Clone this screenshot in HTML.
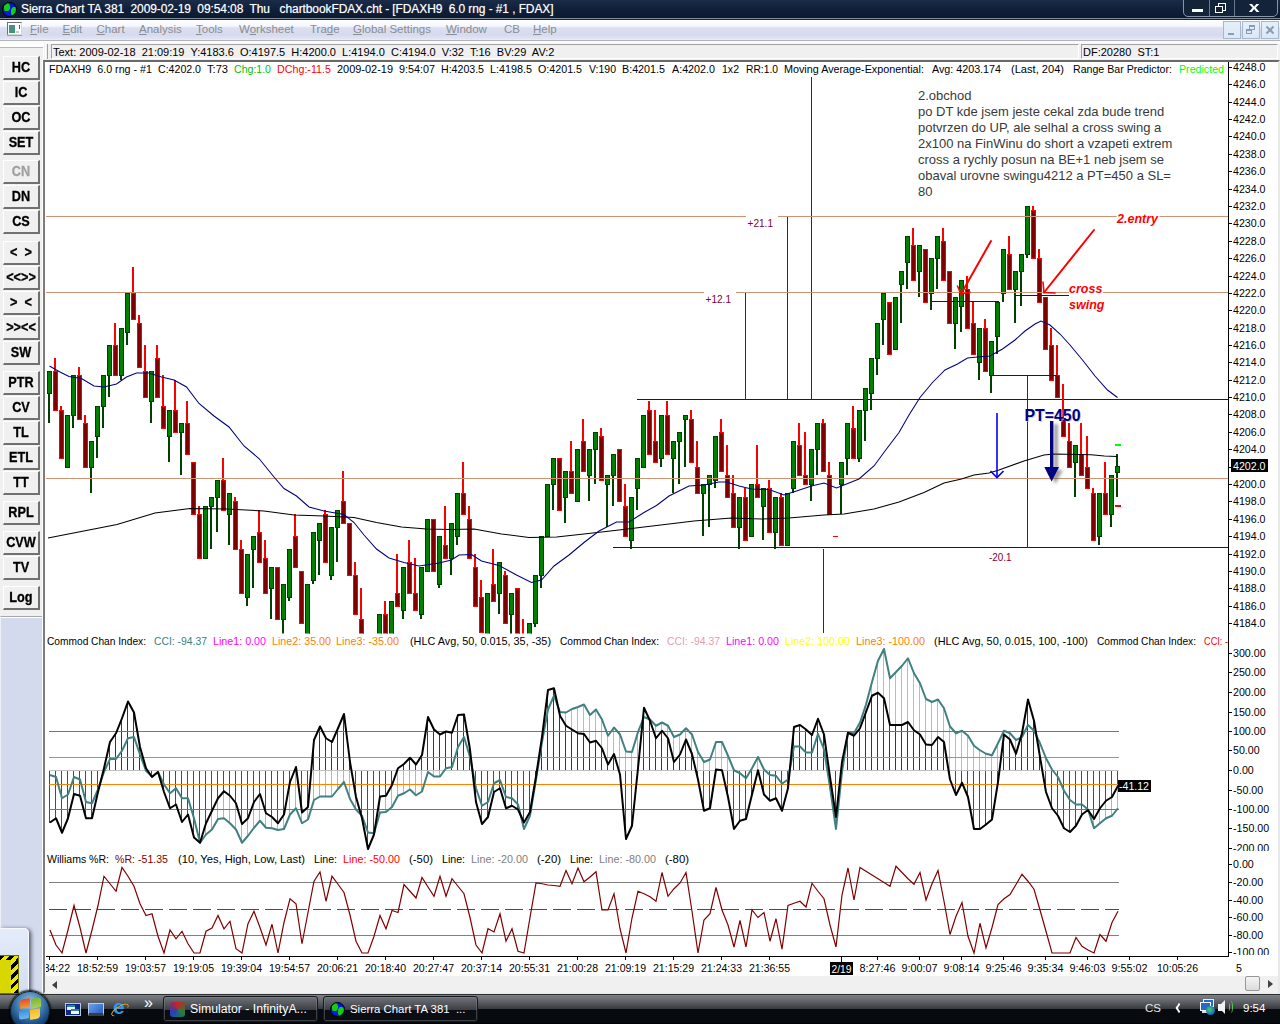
<!DOCTYPE html>
<html><head><meta charset="utf-8"><title>Sierra Chart</title>
<style>
html,body{margin:0;padding:0}
body{width:1280px;height:1024px;overflow:hidden;position:relative;background:#fff;font-family:"Liberation Sans",sans-serif;font-size:11px}
div,span{position:absolute;box-sizing:border-box}
#title{left:0;top:0;width:1280px;height:20px;background:linear-gradient(#1b2c48 0,#10203a 9px,#0c1a2e 18px,#7f8a9a 18px,#7f8a9a 19px,#1a2434 19px)}
#title .t{left:21px;top:2px;color:#fff;font-size:12px;white-space:pre;letter-spacing:-.1px;text-shadow:0 0 1px #fff8}
#globe{left:2px;top:2px;width:15px;height:15px;border-radius:50%;background:#0018e0;overflow:hidden;border:1px solid #000}
#wb{left:1183px;top:-2px;width:95px;height:19px;border:1px solid #8995a8;border-radius:0 0 5px 5px;background:#13233a}
#wb i{position:absolute;top:0;height:17px;border-left:1px solid #6b788c}
#menu{left:0;top:20px;width:1280px;height:21px;background:linear-gradient(#ffffff 0,#f6f7fc 6px,#dcdff1 8px,#d6daee 15px,#e2e5f3 19px,#eef0f8 20px);border-bottom:1px solid #b4b4b8}
.m{top:3px;color:#8a8d93;font-size:11.5px;white-space:pre}
.mb{top:1px;width:18px;height:18px;border:1px solid #a8b8cc;background:linear-gradient(#e6f0fa,#dbe8f6);}
#gap{left:0;top:41px;width:1280px;height:3px;background:#fafafa}
#left{left:0;top:47px;width:43px;height:947px;background:#f0f0f0;border-top:1px solid #b8b8b8}
#lav{left:0;top:616px;width:42px;height:378px;background:#d4daed;border-top:1px solid #a8a8a8;border-left:1px solid #eef0f8;box-shadow:inset 0 1px 0 #fff}
#lstrip{left:42px;top:60px;width:1px;height:934px;background:#fff}
.b{left:3px;width:37px;height:24px;background:#f0f0f0;border:1px solid;border-color:#fff #707070 #707070 #fff;border-right-width:2px;border-bottom-width:2px}
.b span{left:-10px;right:-10px;top:2px;text-align:center;font-weight:bold;font-size:14.6px;transform:scaleX(.87);color:#000;white-space:pre;-webkit-text-stroke:.3px #000}
.b.dis span{color:#a0a0a0;-webkit-text-stroke:.3px #a0a0a0}
#status{left:44px;top:44px;width:1236px;height:16px;background:#f0f0f0}
.sb{top:0;height:15px;border:1px solid;border-color:#a0a0a0 #fff #fff #a0a0a0;font-size:11px;line-height:14px;padding-left:1px;white-space:pre;color:#000}
#chart{left:43px;top:60px;width:1237px;height:934px;background:#fff;border:2px solid;border-color:#696969 #e8e8e8 #e8e8e8 #7c7c7c}
#hs{left:45px;top:976px;width:1233px;height:17px;background:#f0f0f0}
#task{left:0;top:994px;width:1280px;height:30px;background:linear-gradient(#2e3134 0,#2e3134 1px,#7c8084 1px,#6c7074 5px,#36393d 15px,#080c12 15px,#05080c 29px,#000 29px)}
.tb{top:2px;height:26px;border:1px solid #15181c;border-radius:3px;box-shadow:inset 0 0 0 1px #8a8e9466;background:linear-gradient(#70747a,#3a3d42 13px,#0a0e14 13px,#0a0d12);color:#fff;font-size:12.3px;line-height:25px;padding-left:26px;white-space:pre}
svg{position:absolute;left:0;top:0}
</style></head><body>
<div id="title"><div id="globe"><span style="left:1px;top:0;width:6px;height:8px;background:#10d010;border-radius:40% 60% 50% 30%"></span><span style="left:8px;top:4px;width:6px;height:9px;background:#10d010;border-radius:50% 30% 60% 40%"></span></div>
<span class="t">Sierra Chart TA 381  2009-02-19  09:54:08  Thu   chartbookFDAX.cht - [FDAXH9  6.0 rng - #1 , FDAX]</span>
<div id="wb"><i style="left:25px"></i><i style="left:50px"></i>
<span style="left:8px;top:10px;width:11px;height:3px;background:#fff"></span>
<span style="left:34px;top:4px;width:8px;height:8px;border:1.5px solid #fff"></span><span style="left:31px;top:7px;width:8px;height:7px;border:1.5px solid #fff;background:#13233a"></span>
<span style="left:66px;top:-1px;color:#fff;font-weight:bold;font-size:15px;transform:scaleX(1.3)">x</span></div></div>
<div id="menu"><span style="left:7px;top:2px;width:15px;height:13px;border:1px solid;border-color:#707070 #d8d8d8 #d8d8d8 #707070;background:#fff;box-shadow:0 1px 0 #a0a0a0"><span style="left:1px;top:2px;width:6px;height:8px;background:linear-gradient(#4a8aa0,#3f9a60)"></span><span style="left:11px;top:2px;width:1px;height:4px;background:#2060c0"></span><span style="left:8px;top:8px;width:3px;height:2px;background:#c8c8c8"></span></span><span class="m" style="left:30px"><u>F</u>ile</span><span class="m" style="left:62.5px"><u>E</u>dit</span><span class="m" style="left:96.5px"><u>C</u>hart</span><span class="m" style="left:139px"><u>A</u>nalysis</span><span class="m" style="left:196px"><u>T</u>ools</span><span class="m" style="left:239px">W<u>o</u>rksheet</span><span class="m" style="left:310px">Tra<u>d</u>e</span><span class="m" style="left:353px"><u>G</u>lobal Settings</span><span class="m" style="left:446px"><u>W</u>indow</span><span class="m" style="left:504px">CB</span><span class="m" style="left:533px"><u>H</u>elp</span>
<div class="mb" style="left:1223px"><span style="left:4px;top:11px;width:6px;height:2px;background:#8b9bb5"></span></div>
<div class="mb" style="left:1242px"><span style="left:6px;top:3px;width:6px;height:5px;border:1px solid #8b9bb5;border-top-width:2px"></span><span style="left:3px;top:7px;width:6px;height:5px;border:1px solid #8b9bb5;border-top-width:2px;background:#e2e9f6"></span></div>
<div class="mb" style="left:1261px"><span style="left:3px;top:7px;width:10px;height:2px;background:#8b9bb5;transform:rotate(45deg)"></span><span style="left:3px;top:7px;width:10px;height:2px;background:#8b9bb5;transform:rotate(-45deg)"></span></div></div>
<div id="gap"></div>
<div id="left"></div><div id="lav"></div><div id="lstrip"></div>
<div class="b" style="top:56px"><span>HC</span></div><div class="b" style="top:81px"><span>IC</span></div><div class="b" style="top:106px"><span>OC</span></div><div class="b" style="top:131px"><span>SET</span></div><div class="b dis" style="top:160px"><span>CN</span></div><div class="b" style="top:185px"><span>DN</span></div><div class="b" style="top:210px"><span>CS</span></div><div class="b" style="top:241px"><span>&lt;  &gt;</span></div><div class="b" style="top:266px"><span>&lt;&lt;&gt;&gt;</span></div><div class="b" style="top:291px"><span>&gt;  &lt;</span></div><div class="b" style="top:316px"><span>&gt;&gt;&lt;&lt;</span></div><div class="b" style="top:341px"><span>SW</span></div><div class="b" style="top:371px"><span>PTR</span></div><div class="b" style="top:396px"><span>CV</span></div><div class="b" style="top:421px"><span>TL</span></div><div class="b" style="top:446px"><span>ETL</span></div><div class="b" style="top:471px"><span>TT</span></div><div class="b" style="top:501px"><span>RPL</span></div><div class="b" style="top:531px"><span>CVW</span></div><div class="b" style="top:556px"><span>TV</span></div><div class="b" style="top:586px"><span>Log</span></div>
<div id="gadget" style="left:0;top:928px;width:29px;height:66px;background:linear-gradient(#e4ecfa,#d4def2);border:1px solid #f8f9fd;border-left:0;border-radius:0 5px 0 0;box-shadow:2px 1px 4px #4a5068"></div>
<div style="left:0;top:955px;width:19px;height:39px;background:#d8d800;border:1px solid #707000;border-left:0;overflow:hidden"><span style="left:11px;top:0;width:7px;height:39px;background:repeating-linear-gradient(135deg,#000 0 3px,#e8e800 3px 7px)"></span><span style="left:0;top:0;width:19px;height:4px;background:repeating-linear-gradient(135deg,#000 0 3px,#e8e800 3px 7px)"></span></div>
<div id="status"><div class="sb" style="left:7px;width:1028px">Text: 2009-02-18  21:09:19  Y:4183.6  O:4197.5  H:4200.0  L:4194.0  C:4194.0  V:32  T:16  BV:29  AV:2</div><div class="sb" style="left:1037px;width:197px">DF:20280  ST:1</div><span style="left:1px;top:0;width:3px;height:15px;border-left:1px solid #fff;border-right:1px solid #a0a0a0"></span></div>
<div id="chart"></div>
<div id="hs"><span style="left:7px;top:5px;border:4px solid transparent;border-right:5px solid #404040;border-left:0"></span><span style="left:1200px;top:0px;width:15px;height:15px;border:1px solid #979797;border-radius:2px;background:linear-gradient(#f4f4f4,#dcdcdc)"></span><span style="left:1223px;top:4px;border:4px solid transparent;border-left:5px solid #404040;border-right:0"></span></div>
<svg width="1280" height="1024" viewBox="0 0 1280 1024" font-family="'Liberation Sans',sans-serif">
<defs><clipPath id="cm"><rect x="46" y="62" width="1182" height="571.5"/></clipPath><clipPath id="cx"><rect x="46" y="957" width="1232" height="20"/></clipPath><filter id="sh" x="-50%" y="-20%" width="250%" height="150%"><feGaussianBlur stdDeviation="1.6"/></filter></defs>
<g clip-path="url(#cm)" shape-rendering="crispEdges">
<rect x="637" y="399" width="591" height="1" fill="#0000ff"/>
<rect x="613" y="547" width="615" height="1" fill="#0000ff"/>
<rect x="811" y="77" width="1.4" height="323" fill="#800040"/>
<rect x="787" y="217" width="1.4" height="183" fill="#800040"/>
<rect x="745" y="293" width="1.4" height="107" fill="#800040"/>
<rect x="823" y="549" width="1.4" height="84" fill="#800040"/>
<rect x="1027" y="375" width="1.4" height="173" fill="#800040"/>
<rect x="48" y="392.78" width="2" height="30.41" fill="#004000"/>
<rect x="47.5" y="371.56" width="4" height="21.72" fill="#008000" stroke="#004000" stroke-width="1"/>
<rect x="54" y="358.03" width="2" height="13.03" fill="#ff0000"/>
<rect x="53.5" y="371.56" width="4" height="39.09" fill="#800000" stroke="#ff0000" stroke-width="1"/>
<rect x="60" y="405.81" width="2" height="4.34" fill="#ff0000"/>
<rect x="59.5" y="410.66" width="4" height="47.78" fill="#800000" stroke="#ff0000" stroke-width="1"/>
<rect x="65.5" y="415" width="4" height="52.12" fill="#008000" stroke="#004000" stroke-width="1"/>
<rect x="72" y="414.5" width="2" height="13.03" fill="#004000"/>
<rect x="71.5" y="375.91" width="4" height="39.09" fill="#008000" stroke="#004000" stroke-width="1"/>
<rect x="78" y="366.72" width="2" height="8.69" fill="#ff0000"/>
<rect x="77.5" y="375.91" width="4" height="43.44" fill="#800000" stroke="#ff0000" stroke-width="1"/>
<rect x="84" y="414.5" width="2" height="8.69" fill="#ff0000"/>
<rect x="83.5" y="423.69" width="4" height="43.44" fill="#800000" stroke="#ff0000" stroke-width="1"/>
<rect x="90" y="466.62" width="2" height="26.06" fill="#004000"/>
<rect x="89.5" y="441.06" width="4" height="26.06" fill="#008000" stroke="#004000" stroke-width="1"/>
<rect x="96" y="436.22" width="2" height="21.72" fill="#004000"/>
<rect x="95.5" y="406.31" width="4" height="30.41" fill="#008000" stroke="#004000" stroke-width="1"/>
<rect x="102" y="405.81" width="2" height="21.72" fill="#004000"/>
<rect x="101.5" y="375.91" width="4" height="30.41" fill="#008000" stroke="#004000" stroke-width="1"/>
<rect x="108" y="375.41" width="2" height="21.72" fill="#004000"/>
<rect x="107.5" y="345.5" width="4" height="30.41" fill="#008000" stroke="#004000" stroke-width="1"/>
<rect x="114" y="323.28" width="2" height="21.72" fill="#ff0000"/>
<rect x="113.5" y="345.5" width="4" height="30.41" fill="#800000" stroke="#ff0000" stroke-width="1"/>
<rect x="120" y="375.41" width="2" height="4.34" fill="#004000"/>
<rect x="119.5" y="328.12" width="4" height="47.78" fill="#008000" stroke="#004000" stroke-width="1"/>
<rect x="126" y="331.97" width="2" height="13.03" fill="#004000"/>
<rect x="125.5" y="293.38" width="4" height="39.09" fill="#008000" stroke="#004000" stroke-width="1"/>
<rect x="132" y="266.81" width="2" height="26.06" fill="#ff0000"/>
<rect x="131.5" y="293.38" width="4" height="26.06" fill="#800000" stroke="#ff0000" stroke-width="1"/>
<rect x="138" y="314.59" width="2" height="8.69" fill="#ff0000"/>
<rect x="137.5" y="323.78" width="4" height="43.44" fill="#800000" stroke="#ff0000" stroke-width="1"/>
<rect x="144" y="345" width="2" height="26.06" fill="#ff0000"/>
<rect x="143.5" y="371.56" width="4" height="26.06" fill="#800000" stroke="#ff0000" stroke-width="1"/>
<rect x="150" y="401.47" width="2" height="21.72" fill="#004000"/>
<rect x="149.5" y="371.56" width="4" height="30.41" fill="#008000" stroke="#004000" stroke-width="1"/>
<rect x="156" y="345" width="2" height="13.03" fill="#ff0000"/>
<rect x="155.5" y="358.53" width="4" height="39.09" fill="#800000" stroke="#ff0000" stroke-width="1"/>
<rect x="162" y="375.41" width="2" height="30.41" fill="#ff0000"/>
<rect x="161.5" y="406.31" width="4" height="21.72" fill="#800000" stroke="#ff0000" stroke-width="1"/>
<rect x="168" y="436.22" width="2" height="26.06" fill="#004000"/>
<rect x="167.5" y="410.66" width="4" height="26.06" fill="#008000" stroke="#004000" stroke-width="1"/>
<rect x="174" y="379.75" width="2" height="30.41" fill="#ff0000"/>
<rect x="173.5" y="410.66" width="4" height="21.72" fill="#800000" stroke="#ff0000" stroke-width="1"/>
<rect x="180" y="431.88" width="2" height="43.44" fill="#004000"/>
<rect x="179.5" y="423.69" width="4" height="8.69" fill="#008000" stroke="#004000" stroke-width="1"/>
<rect x="186" y="401.47" width="2" height="21.72" fill="#ff0000"/>
<rect x="185.5" y="423.69" width="4" height="30.41" fill="#800000" stroke="#ff0000" stroke-width="1"/>
<rect x="191.5" y="462.78" width="4" height="52.12" fill="#800000" stroke="#ff0000" stroke-width="1"/>
<rect x="198" y="505.72" width="2" height="8.69" fill="#ff0000"/>
<rect x="197.5" y="514.91" width="4" height="43.44" fill="#800000" stroke="#ff0000" stroke-width="1"/>
<rect x="203.5" y="506.22" width="4" height="52.12" fill="#008000" stroke="#004000" stroke-width="1"/>
<rect x="210" y="505.72" width="2" height="43.44" fill="#004000"/>
<rect x="209.5" y="497.53" width="4" height="8.69" fill="#008000" stroke="#004000" stroke-width="1"/>
<rect x="216" y="497.03" width="2" height="34.75" fill="#004000"/>
<rect x="215.5" y="480.16" width="4" height="17.38" fill="#008000" stroke="#004000" stroke-width="1"/>
<rect x="222" y="457.94" width="2" height="21.72" fill="#ff0000"/>
<rect x="221.5" y="480.16" width="4" height="30.41" fill="#800000" stroke="#ff0000" stroke-width="1"/>
<rect x="228" y="514.41" width="2" height="30.41" fill="#004000"/>
<rect x="227.5" y="493.19" width="4" height="21.72" fill="#008000" stroke="#004000" stroke-width="1"/>
<rect x="234" y="497.03" width="2" height="4.34" fill="#ff0000"/>
<rect x="233.5" y="501.88" width="4" height="47.78" fill="#800000" stroke="#ff0000" stroke-width="1"/>
<rect x="240" y="540.47" width="2" height="8.69" fill="#ff0000"/>
<rect x="239.5" y="549.66" width="4" height="43.44" fill="#800000" stroke="#ff0000" stroke-width="1"/>
<rect x="246" y="596.94" width="2" height="8.69" fill="#004000"/>
<rect x="245.5" y="554" width="4" height="43.44" fill="#008000" stroke="#004000" stroke-width="1"/>
<rect x="252" y="549.16" width="2" height="39.09" fill="#004000"/>
<rect x="251.5" y="536.62" width="4" height="13.03" fill="#008000" stroke="#004000" stroke-width="1"/>
<rect x="258" y="510.06" width="2" height="21.72" fill="#ff0000"/>
<rect x="257.5" y="532.28" width="4" height="30.41" fill="#800000" stroke="#ff0000" stroke-width="1"/>
<rect x="264" y="540.47" width="2" height="17.38" fill="#ff0000"/>
<rect x="263.5" y="558.34" width="4" height="34.75" fill="#800000" stroke="#ff0000" stroke-width="1"/>
<rect x="270" y="588.25" width="2" height="30.41" fill="#004000"/>
<rect x="269.5" y="567.03" width="4" height="21.72" fill="#008000" stroke="#004000" stroke-width="1"/>
<rect x="275.5" y="567.03" width="4" height="52.12" fill="#800000" stroke="#ff0000" stroke-width="1"/>
<rect x="282" y="618.66" width="2" height="17.38" fill="#004000"/>
<rect x="281.5" y="584.41" width="4" height="34.75" fill="#008000" stroke="#004000" stroke-width="1"/>
<rect x="288" y="596.94" width="2" height="4.34" fill="#004000"/>
<rect x="287.5" y="549.66" width="4" height="47.78" fill="#008000" stroke="#004000" stroke-width="1"/>
<rect x="294" y="514.41" width="2" height="21.72" fill="#ff0000"/>
<rect x="293.5" y="536.62" width="4" height="30.41" fill="#800000" stroke="#ff0000" stroke-width="1"/>
<rect x="299.5" y="571.38" width="4" height="52.12" fill="#800000" stroke="#ff0000" stroke-width="1"/>
<rect x="305.5" y="584.41" width="4" height="52.12" fill="#008000" stroke="#004000" stroke-width="1"/>
<rect x="312" y="579.56" width="2" height="4.34" fill="#004000"/>
<rect x="311.5" y="532.28" width="4" height="47.78" fill="#008000" stroke="#004000" stroke-width="1"/>
<rect x="318" y="540.47" width="2" height="34.75" fill="#004000"/>
<rect x="317.5" y="523.59" width="4" height="17.38" fill="#008000" stroke="#004000" stroke-width="1"/>
<rect x="324" y="510.06" width="2" height="4.34" fill="#ff0000"/>
<rect x="323.5" y="514.91" width="4" height="47.78" fill="#800000" stroke="#ff0000" stroke-width="1"/>
<rect x="330" y="575.22" width="2" height="4.34" fill="#004000"/>
<rect x="329.5" y="527.94" width="4" height="47.78" fill="#008000" stroke="#004000" stroke-width="1"/>
<rect x="336" y="527.44" width="2" height="34.75" fill="#004000"/>
<rect x="335.5" y="510.56" width="4" height="17.38" fill="#008000" stroke="#004000" stroke-width="1"/>
<rect x="342" y="470.97" width="2" height="30.41" fill="#ff0000"/>
<rect x="341.5" y="501.88" width="4" height="21.72" fill="#800000" stroke="#ff0000" stroke-width="1"/>
<rect x="347.5" y="523.59" width="4" height="52.12" fill="#800000" stroke="#ff0000" stroke-width="1"/>
<rect x="354" y="562.19" width="2" height="13.03" fill="#ff0000"/>
<rect x="353.5" y="575.72" width="4" height="39.09" fill="#800000" stroke="#ff0000" stroke-width="1"/>
<rect x="360" y="588.25" width="2" height="30.41" fill="#ff0000"/>
<rect x="359.5" y="619.16" width="4" height="21.72" fill="#800000" stroke="#ff0000" stroke-width="1"/>
<rect x="366" y="640.38" width="2" height="8.69" fill="#ff0000"/>
<rect x="365.5" y="649.56" width="4" height="34.75" fill="#800000" stroke="#ff0000" stroke-width="1"/>
<rect x="372" y="675.12" width="2" height="8.69" fill="#004000"/>
<rect x="371.5" y="640.88" width="4" height="34.75" fill="#008000" stroke="#004000" stroke-width="1"/>
<rect x="378" y="657.75" width="2" height="8.69" fill="#004000"/>
<rect x="377.5" y="614.81" width="4" height="43.44" fill="#008000" stroke="#004000" stroke-width="1"/>
<rect x="384" y="601.28" width="2" height="13.03" fill="#ff0000"/>
<rect x="383.5" y="614.81" width="4" height="39.09" fill="#800000" stroke="#ff0000" stroke-width="1"/>
<rect x="390" y="649.06" width="2" height="4.34" fill="#004000"/>
<rect x="389.5" y="601.78" width="4" height="47.78" fill="#008000" stroke="#004000" stroke-width="1"/>
<rect x="396" y="553.5" width="2" height="39.09" fill="#ff0000"/>
<rect x="395.5" y="593.09" width="4" height="13.03" fill="#800000" stroke="#ff0000" stroke-width="1"/>
<rect x="402" y="609.97" width="2" height="8.69" fill="#004000"/>
<rect x="401.5" y="567.03" width="4" height="43.44" fill="#008000" stroke="#004000" stroke-width="1"/>
<rect x="408" y="540.47" width="2" height="21.72" fill="#ff0000"/>
<rect x="407.5" y="562.69" width="4" height="30.41" fill="#800000" stroke="#ff0000" stroke-width="1"/>
<rect x="414" y="557.84" width="2" height="34.75" fill="#ff0000"/>
<rect x="413.5" y="593.09" width="4" height="17.38" fill="#800000" stroke="#ff0000" stroke-width="1"/>
<rect x="420" y="614.31" width="2" height="4.34" fill="#004000"/>
<rect x="419.5" y="567.03" width="4" height="47.78" fill="#008000" stroke="#004000" stroke-width="1"/>
<rect x="425.5" y="519.25" width="4" height="52.12" fill="#008000" stroke="#004000" stroke-width="1"/>
<rect x="431.5" y="519.25" width="4" height="52.12" fill="#800000" stroke="#ff0000" stroke-width="1"/>
<rect x="438" y="583.91" width="2" height="4.34" fill="#004000"/>
<rect x="437.5" y="536.62" width="4" height="47.78" fill="#008000" stroke="#004000" stroke-width="1"/>
<rect x="444" y="505.72" width="2" height="39.09" fill="#ff0000"/>
<rect x="443.5" y="545.31" width="4" height="13.03" fill="#800000" stroke="#ff0000" stroke-width="1"/>
<rect x="450" y="557.84" width="2" height="17.38" fill="#004000"/>
<rect x="449.5" y="523.59" width="4" height="34.75" fill="#008000" stroke="#004000" stroke-width="1"/>
<rect x="456" y="536.12" width="2" height="8.69" fill="#004000"/>
<rect x="455.5" y="493.19" width="4" height="43.44" fill="#008000" stroke="#004000" stroke-width="1"/>
<rect x="462" y="462.28" width="2" height="30.41" fill="#ff0000"/>
<rect x="461.5" y="493.19" width="4" height="21.72" fill="#800000" stroke="#ff0000" stroke-width="1"/>
<rect x="468" y="505.72" width="2" height="13.03" fill="#ff0000"/>
<rect x="467.5" y="519.25" width="4" height="39.09" fill="#800000" stroke="#ff0000" stroke-width="1"/>
<rect x="474" y="553.5" width="2" height="13.03" fill="#ff0000"/>
<rect x="473.5" y="567.03" width="4" height="39.09" fill="#800000" stroke="#ff0000" stroke-width="1"/>
<rect x="480" y="579.56" width="2" height="17.38" fill="#ff0000"/>
<rect x="479.5" y="597.44" width="4" height="34.75" fill="#800000" stroke="#ff0000" stroke-width="1"/>
<rect x="486" y="640.38" width="2" height="4.34" fill="#004000"/>
<rect x="485.5" y="593.09" width="4" height="47.78" fill="#008000" stroke="#004000" stroke-width="1"/>
<rect x="492" y="549.16" width="2" height="34.75" fill="#ff0000"/>
<rect x="491.5" y="584.41" width="4" height="17.38" fill="#800000" stroke="#ff0000" stroke-width="1"/>
<rect x="498" y="592.59" width="2" height="21.72" fill="#004000"/>
<rect x="497.5" y="562.69" width="4" height="30.41" fill="#008000" stroke="#004000" stroke-width="1"/>
<rect x="504" y="570.88" width="2" height="4.34" fill="#ff0000"/>
<rect x="503.5" y="575.72" width="4" height="47.78" fill="#800000" stroke="#ff0000" stroke-width="1"/>
<rect x="510" y="614.31" width="2" height="30.41" fill="#004000"/>
<rect x="509.5" y="593.09" width="4" height="21.72" fill="#008000" stroke="#004000" stroke-width="1"/>
<rect x="515.5" y="588.75" width="4" height="52.12" fill="#800000" stroke="#ff0000" stroke-width="1"/>
<rect x="522" y="618.66" width="2" height="30.41" fill="#ff0000"/>
<rect x="521.5" y="649.56" width="4" height="21.72" fill="#800000" stroke="#ff0000" stroke-width="1"/>
<rect x="528" y="666.44" width="2" height="8.69" fill="#004000"/>
<rect x="527.5" y="623.5" width="4" height="43.44" fill="#008000" stroke="#004000" stroke-width="1"/>
<rect x="534" y="623" width="2" height="4.34" fill="#004000"/>
<rect x="533.5" y="575.72" width="4" height="47.78" fill="#008000" stroke="#004000" stroke-width="1"/>
<rect x="540" y="575.22" width="2" height="13.03" fill="#004000"/>
<rect x="539.5" y="536.62" width="4" height="39.09" fill="#008000" stroke="#004000" stroke-width="1"/>
<rect x="545.5" y="484.5" width="4" height="52.12" fill="#008000" stroke="#004000" stroke-width="1"/>
<rect x="552" y="484" width="2" height="26.06" fill="#004000"/>
<rect x="551.5" y="458.44" width="4" height="26.06" fill="#008000" stroke="#004000" stroke-width="1"/>
<rect x="557.5" y="458.44" width="4" height="52.12" fill="#800000" stroke="#ff0000" stroke-width="1"/>
<rect x="564" y="497.03" width="2" height="26.06" fill="#004000"/>
<rect x="563.5" y="471.47" width="4" height="26.06" fill="#008000" stroke="#004000" stroke-width="1"/>
<rect x="570" y="440.56" width="2" height="30.41" fill="#ff0000"/>
<rect x="569.5" y="471.47" width="4" height="21.72" fill="#800000" stroke="#ff0000" stroke-width="1"/>
<rect x="575.5" y="449.75" width="4" height="52.12" fill="#008000" stroke="#004000" stroke-width="1"/>
<rect x="582" y="418.84" width="2" height="21.72" fill="#ff0000"/>
<rect x="581.5" y="441.06" width="4" height="30.41" fill="#800000" stroke="#ff0000" stroke-width="1"/>
<rect x="588" y="475.31" width="2" height="26.06" fill="#004000"/>
<rect x="587.5" y="449.75" width="4" height="26.06" fill="#008000" stroke="#004000" stroke-width="1"/>
<rect x="594" y="449.25" width="2" height="34.75" fill="#004000"/>
<rect x="593.5" y="432.38" width="4" height="17.38" fill="#008000" stroke="#004000" stroke-width="1"/>
<rect x="600" y="427.53" width="2" height="8.69" fill="#ff0000"/>
<rect x="599.5" y="436.72" width="4" height="43.44" fill="#800000" stroke="#ff0000" stroke-width="1"/>
<rect x="606" y="484" width="2" height="43.44" fill="#004000"/>
<rect x="605.5" y="475.81" width="4" height="8.69" fill="#008000" stroke="#004000" stroke-width="1"/>
<rect x="612" y="475.31" width="2" height="30.41" fill="#004000"/>
<rect x="611.5" y="454.09" width="4" height="21.72" fill="#008000" stroke="#004000" stroke-width="1"/>
<rect x="617.5" y="449.75" width="4" height="52.12" fill="#800000" stroke="#ff0000" stroke-width="1"/>
<rect x="624" y="484" width="2" height="21.72" fill="#ff0000"/>
<rect x="623.5" y="506.22" width="4" height="30.41" fill="#800000" stroke="#ff0000" stroke-width="1"/>
<rect x="630" y="540.47" width="2" height="8.69" fill="#004000"/>
<rect x="629.5" y="497.53" width="4" height="43.44" fill="#008000" stroke="#004000" stroke-width="1"/>
<rect x="636" y="488.34" width="2" height="21.72" fill="#004000"/>
<rect x="635.5" y="458.44" width="4" height="30.41" fill="#008000" stroke="#004000" stroke-width="1"/>
<rect x="641.5" y="415" width="4" height="52.12" fill="#008000" stroke="#004000" stroke-width="1"/>
<rect x="648" y="401.47" width="2" height="8.69" fill="#ff0000"/>
<rect x="647.5" y="410.66" width="4" height="43.44" fill="#800000" stroke="#ff0000" stroke-width="1"/>
<rect x="654" y="410.16" width="2" height="30.41" fill="#ff0000"/>
<rect x="653.5" y="441.06" width="4" height="21.72" fill="#800000" stroke="#ff0000" stroke-width="1"/>
<rect x="660" y="457.94" width="2" height="8.69" fill="#004000"/>
<rect x="659.5" y="415" width="4" height="43.44" fill="#008000" stroke="#004000" stroke-width="1"/>
<rect x="666" y="401.47" width="2" height="13.03" fill="#ff0000"/>
<rect x="665.5" y="415" width="4" height="39.09" fill="#800000" stroke="#ff0000" stroke-width="1"/>
<rect x="672" y="457.94" width="2" height="34.75" fill="#004000"/>
<rect x="671.5" y="441.06" width="4" height="17.38" fill="#008000" stroke="#004000" stroke-width="1"/>
<rect x="678" y="440.56" width="2" height="43.44" fill="#004000"/>
<rect x="677.5" y="432.38" width="4" height="8.69" fill="#008000" stroke="#004000" stroke-width="1"/>
<rect x="684" y="418.84" width="2" height="47.78" fill="#004000"/>
<rect x="683.5" y="415" width="4" height="4.34" fill="#008000" stroke="#004000" stroke-width="1"/>
<rect x="690" y="410.16" width="2" height="8.69" fill="#ff0000"/>
<rect x="689.5" y="419.34" width="4" height="43.44" fill="#800000" stroke="#ff0000" stroke-width="1"/>
<rect x="696" y="440.56" width="2" height="26.06" fill="#ff0000"/>
<rect x="695.5" y="467.12" width="4" height="26.06" fill="#800000" stroke="#ff0000" stroke-width="1"/>
<rect x="702" y="492.69" width="2" height="43.44" fill="#004000"/>
<rect x="701.5" y="484.5" width="4" height="8.69" fill="#008000" stroke="#004000" stroke-width="1"/>
<rect x="708" y="484" width="2" height="43.44" fill="#004000"/>
<rect x="707.5" y="475.81" width="4" height="8.69" fill="#008000" stroke="#004000" stroke-width="1"/>
<rect x="714" y="479.66" width="2" height="8.69" fill="#004000"/>
<rect x="713.5" y="436.72" width="4" height="43.44" fill="#008000" stroke="#004000" stroke-width="1"/>
<rect x="720" y="418.84" width="2" height="13.03" fill="#ff0000"/>
<rect x="719.5" y="432.38" width="4" height="39.09" fill="#800000" stroke="#ff0000" stroke-width="1"/>
<rect x="726" y="444.91" width="2" height="30.41" fill="#ff0000"/>
<rect x="725.5" y="475.81" width="4" height="21.72" fill="#800000" stroke="#ff0000" stroke-width="1"/>
<rect x="732" y="475.31" width="2" height="17.38" fill="#ff0000"/>
<rect x="731.5" y="493.19" width="4" height="34.75" fill="#800000" stroke="#ff0000" stroke-width="1"/>
<rect x="738" y="527.44" width="2" height="21.72" fill="#004000"/>
<rect x="737.5" y="497.53" width="4" height="30.41" fill="#008000" stroke="#004000" stroke-width="1"/>
<rect x="744" y="488.34" width="2" height="8.69" fill="#ff0000"/>
<rect x="743.5" y="497.53" width="4" height="43.44" fill="#800000" stroke="#ff0000" stroke-width="1"/>
<rect x="749.5" y="484.5" width="4" height="52.12" fill="#008000" stroke="#004000" stroke-width="1"/>
<rect x="756" y="444.91" width="2" height="39.09" fill="#ff0000"/>
<rect x="755.5" y="484.5" width="4" height="13.03" fill="#800000" stroke="#ff0000" stroke-width="1"/>
<rect x="762" y="505.72" width="2" height="34.75" fill="#004000"/>
<rect x="761.5" y="488.84" width="4" height="17.38" fill="#008000" stroke="#004000" stroke-width="1"/>
<rect x="768" y="479.66" width="2" height="8.69" fill="#ff0000"/>
<rect x="767.5" y="488.84" width="4" height="43.44" fill="#800000" stroke="#ff0000" stroke-width="1"/>
<rect x="774" y="531.78" width="2" height="17.38" fill="#004000"/>
<rect x="773.5" y="497.53" width="4" height="34.75" fill="#008000" stroke="#004000" stroke-width="1"/>
<rect x="780" y="492.69" width="2" height="4.34" fill="#ff0000"/>
<rect x="779.5" y="497.53" width="4" height="47.78" fill="#800000" stroke="#ff0000" stroke-width="1"/>
<rect x="785.5" y="493.19" width="4" height="52.12" fill="#008000" stroke="#004000" stroke-width="1"/>
<rect x="792" y="488.34" width="2" height="4.34" fill="#004000"/>
<rect x="791.5" y="441.06" width="4" height="47.78" fill="#008000" stroke="#004000" stroke-width="1"/>
<rect x="798" y="423.19" width="2" height="21.72" fill="#ff0000"/>
<rect x="797.5" y="445.41" width="4" height="30.41" fill="#800000" stroke="#ff0000" stroke-width="1"/>
<rect x="804" y="431.88" width="2" height="43.44" fill="#ff0000"/>
<rect x="803.5" y="475.81" width="4" height="8.69" fill="#800000" stroke="#ff0000" stroke-width="1"/>
<rect x="810" y="484" width="2" height="17.38" fill="#004000"/>
<rect x="809.5" y="449.75" width="4" height="34.75" fill="#008000" stroke="#004000" stroke-width="1"/>
<rect x="816" y="449.25" width="2" height="26.06" fill="#004000"/>
<rect x="815.5" y="423.69" width="4" height="26.06" fill="#008000" stroke="#004000" stroke-width="1"/>
<rect x="822" y="418.84" width="2" height="4.34" fill="#ff0000"/>
<rect x="821.5" y="423.69" width="4" height="47.78" fill="#800000" stroke="#ff0000" stroke-width="1"/>
<rect x="828" y="462.28" width="2" height="13.03" fill="#ff0000"/>
<rect x="827.5" y="475.81" width="4" height="39.09" fill="#800000" stroke="#ff0000" stroke-width="1"/>
<rect x="833" y="536" width="5" height="1" fill="#ff0000"/>
<rect x="840" y="484" width="2" height="30.41" fill="#004000"/>
<rect x="839.5" y="462.78" width="4" height="21.72" fill="#008000" stroke="#004000" stroke-width="1"/>
<rect x="846" y="457.94" width="2" height="17.38" fill="#004000"/>
<rect x="845.5" y="423.69" width="4" height="34.75" fill="#008000" stroke="#004000" stroke-width="1"/>
<rect x="852" y="405.81" width="2" height="21.72" fill="#ff0000"/>
<rect x="851.5" y="428.03" width="4" height="30.41" fill="#800000" stroke="#ff0000" stroke-width="1"/>
<rect x="858" y="457.94" width="2" height="4.34" fill="#004000"/>
<rect x="857.5" y="410.66" width="4" height="47.78" fill="#008000" stroke="#004000" stroke-width="1"/>
<rect x="864" y="410.16" width="2" height="30.41" fill="#004000"/>
<rect x="863.5" y="388.94" width="4" height="21.72" fill="#008000" stroke="#004000" stroke-width="1"/>
<rect x="870" y="392.78" width="2" height="17.38" fill="#004000"/>
<rect x="869.5" y="358.53" width="4" height="34.75" fill="#008000" stroke="#004000" stroke-width="1"/>
<rect x="876" y="358.03" width="2" height="17.38" fill="#004000"/>
<rect x="875.5" y="323.78" width="4" height="34.75" fill="#008000" stroke="#004000" stroke-width="1"/>
<rect x="882" y="318.94" width="2" height="26.06" fill="#004000"/>
<rect x="881.5" y="293.38" width="4" height="26.06" fill="#008000" stroke="#004000" stroke-width="1"/>
<rect x="887.5" y="302.06" width="4" height="52.12" fill="#800000" stroke="#ff0000" stroke-width="1"/>
<rect x="893.5" y="297.72" width="4" height="52.12" fill="#008000" stroke="#004000" stroke-width="1"/>
<rect x="900" y="284.19" width="2" height="39.09" fill="#004000"/>
<rect x="899.5" y="271.66" width="4" height="13.03" fill="#008000" stroke="#004000" stroke-width="1"/>
<rect x="906" y="262.47" width="2" height="26.06" fill="#004000"/>
<rect x="905.5" y="236.91" width="4" height="26.06" fill="#008000" stroke="#004000" stroke-width="1"/>
<rect x="912" y="227.72" width="2" height="17.38" fill="#ff0000"/>
<rect x="911.5" y="245.59" width="4" height="34.75" fill="#800000" stroke="#ff0000" stroke-width="1"/>
<rect x="918" y="271.16" width="2" height="26.06" fill="#004000"/>
<rect x="917.5" y="245.59" width="4" height="26.06" fill="#008000" stroke="#004000" stroke-width="1"/>
<rect x="923.5" y="249.94" width="4" height="52.12" fill="#800000" stroke="#ff0000" stroke-width="1"/>
<rect x="930" y="292.88" width="2" height="17.38" fill="#004000"/>
<rect x="929.5" y="258.62" width="4" height="34.75" fill="#008000" stroke="#004000" stroke-width="1"/>
<rect x="936" y="258.12" width="2" height="30.41" fill="#004000"/>
<rect x="935.5" y="236.91" width="4" height="21.72" fill="#008000" stroke="#004000" stroke-width="1"/>
<rect x="942" y="227.72" width="2" height="13.03" fill="#ff0000"/>
<rect x="941.5" y="241.25" width="4" height="39.09" fill="#800000" stroke="#ff0000" stroke-width="1"/>
<rect x="947.5" y="271.66" width="4" height="52.12" fill="#800000" stroke="#ff0000" stroke-width="1"/>
<rect x="954" y="323.28" width="2" height="26.06" fill="#004000"/>
<rect x="953.5" y="297.72" width="4" height="26.06" fill="#008000" stroke="#004000" stroke-width="1"/>
<rect x="960" y="305.91" width="2" height="26.06" fill="#004000"/>
<rect x="959.5" y="280.34" width="4" height="26.06" fill="#008000" stroke="#004000" stroke-width="1"/>
<rect x="966" y="275.5" width="2" height="13.03" fill="#ff0000"/>
<rect x="965.5" y="289.03" width="4" height="39.09" fill="#800000" stroke="#ff0000" stroke-width="1"/>
<rect x="972" y="301.56" width="2" height="21.72" fill="#ff0000"/>
<rect x="971.5" y="323.78" width="4" height="30.41" fill="#800000" stroke="#ff0000" stroke-width="1"/>
<rect x="978" y="362.38" width="2" height="17.38" fill="#004000"/>
<rect x="977.5" y="328.12" width="4" height="34.75" fill="#008000" stroke="#004000" stroke-width="1"/>
<rect x="984" y="318.94" width="2" height="8.69" fill="#ff0000"/>
<rect x="983.5" y="328.12" width="4" height="43.44" fill="#800000" stroke="#ff0000" stroke-width="1"/>
<rect x="990" y="375.41" width="2" height="17.38" fill="#004000"/>
<rect x="989.5" y="341.16" width="4" height="34.75" fill="#008000" stroke="#004000" stroke-width="1"/>
<rect x="996" y="336.31" width="2" height="17.38" fill="#004000"/>
<rect x="995.5" y="302.06" width="4" height="34.75" fill="#008000" stroke="#004000" stroke-width="1"/>
<rect x="1002" y="292.88" width="2" height="8.69" fill="#004000"/>
<rect x="1001.5" y="249.94" width="4" height="43.44" fill="#008000" stroke="#004000" stroke-width="1"/>
<rect x="1008" y="236.41" width="2" height="17.38" fill="#ff0000"/>
<rect x="1007.5" y="254.28" width="4" height="34.75" fill="#800000" stroke="#ff0000" stroke-width="1"/>
<rect x="1014" y="288.53" width="2" height="34.75" fill="#004000"/>
<rect x="1013.5" y="271.66" width="4" height="17.38" fill="#008000" stroke="#004000" stroke-width="1"/>
<rect x="1020" y="271.16" width="2" height="34.75" fill="#004000"/>
<rect x="1019.5" y="254.28" width="4" height="17.38" fill="#008000" stroke="#004000" stroke-width="1"/>
<rect x="1026" y="253.78" width="2" height="4.34" fill="#004000"/>
<rect x="1025.5" y="206.5" width="4" height="47.78" fill="#008000" stroke="#004000" stroke-width="1"/>
<rect x="1032" y="206" width="2" height="4.34" fill="#ff0000"/>
<rect x="1031.5" y="210.84" width="4" height="47.78" fill="#800000" stroke="#ff0000" stroke-width="1"/>
<rect x="1038" y="249.44" width="2" height="8.69" fill="#ff0000"/>
<rect x="1037.5" y="258.62" width="4" height="43.44" fill="#800000" stroke="#ff0000" stroke-width="1"/>
<rect x="1043.5" y="297.72" width="4" height="52.12" fill="#800000" stroke="#ff0000" stroke-width="1"/>
<rect x="1050" y="327.62" width="2" height="17.38" fill="#ff0000"/>
<rect x="1049.5" y="345.5" width="4" height="34.75" fill="#800000" stroke="#ff0000" stroke-width="1"/>
<rect x="1056" y="345" width="2" height="30.41" fill="#ff0000"/>
<rect x="1055.5" y="375.91" width="4" height="21.72" fill="#800000" stroke="#ff0000" stroke-width="1"/>
<rect x="1062" y="384.09" width="2" height="34.75" fill="#ff0000"/>
<rect x="1061.5" y="419.34" width="4" height="17.38" fill="#800000" stroke="#ff0000" stroke-width="1"/>
<rect x="1068" y="423.19" width="2" height="17.38" fill="#ff0000"/>
<rect x="1067.5" y="441.06" width="4" height="26.06" fill="#800000" stroke="#ff0000" stroke-width="1"/>
<rect x="1074" y="462.28" width="2" height="34.75" fill="#004000"/>
<rect x="1073.5" y="445.41" width="4" height="17.38" fill="#008000" stroke="#004000" stroke-width="1"/>
<rect x="1080" y="423.19" width="2" height="30.41" fill="#ff0000"/>
<rect x="1079.5" y="454.09" width="4" height="21.72" fill="#800000" stroke="#ff0000" stroke-width="1"/>
<rect x="1086" y="436.22" width="2" height="30.41" fill="#ff0000"/>
<rect x="1085.5" y="467.12" width="4" height="21.72" fill="#800000" stroke="#ff0000" stroke-width="1"/>
<rect x="1092" y="488.34" width="2" height="4.34" fill="#ff0000"/>
<rect x="1091.5" y="493.19" width="4" height="47.78" fill="#800000" stroke="#ff0000" stroke-width="1"/>
<rect x="1098" y="536.12" width="2" height="8.69" fill="#004000"/>
<rect x="1097.5" y="493.19" width="4" height="43.44" fill="#008000" stroke="#004000" stroke-width="1"/>
<rect x="1104" y="462.28" width="2" height="30.41" fill="#ff0000"/>
<rect x="1103.5" y="493.19" width="4" height="21.72" fill="#800000" stroke="#ff0000" stroke-width="1"/>
<rect x="1110" y="514.41" width="2" height="13.03" fill="#004000"/>
<rect x="1109.5" y="475.81" width="4" height="39.09" fill="#008000" stroke="#004000" stroke-width="1"/>
<rect x="1116" y="453.59" width="2" height="43.44" fill="#004000"/>
<rect x="1115.5" y="466.12" width="4" height="6" fill="#008000" stroke="#004000" stroke-width="1"/>
<rect x="46" y="216" width="1182" height="1" fill="#cf9272"/>
<rect x="46" y="292" width="1182" height="1" fill="#cf9272"/>
<rect x="46" y="478" width="1182" height="1" fill="#cf9272"/>
<rect x="1115" y="443.91" width="6" height="2" fill="#00ff00"/>
<rect x="1115" y="504.72" width="6" height="2" fill="#ff0000"/>
<rect x="931" y="300.5" width="68" height="1.4" fill="#0000ff"/>
<rect x="1015" y="295" width="54" height="1.4" fill="#0000ff"/>
<rect x="990" y="375" width="67" height="1.4" fill="#0000ff"/>
</g>
<g clip-path="url(#cm)" fill="none">
<polyline points="48,538 117,524.5 155,513 190,508.5 226.5,509 264,511 294,515 324,516 354,517.5 376.5,522.5 401.5,527 426.5,529 451.5,529.5 474,529 501.5,534 529,537.5 556.5,537 584,534 619,530 644,527 669,524 694,521 719,519 731.5,518 761.5,519 789,518 824,515 844,514 874,509 899,502 924,492.5 944,483 961.5,479 974,475 989,473 999,470 1024,461 1044,455 1053.75,454 1091,454.7 1104.4,456 1117,456.5" stroke="#000000" stroke-width="1.05" fill="none" />
<polyline points="49.5,366 59,371.5 69,376.5 81.5,378.5 94,386 104,387 116.5,384 126.5,377 136.5,373 149,373 161.5,377 174,380 186.5,387 199,403.5 214,416 229,427 244,446 259,458.5 274,477 284,488.5 296.5,496 309,507 324,511 344,514.5 354,522.5 364,535 376.5,549 389,558 404,562.5 419,566 439,563 451.5,560 459,555 471.5,554.5 481.5,561 499,565.5 516.5,575 531.5,582.5 541.5,580 554,566 569,555 584,542.5 599,531 616.5,522 629,522 644,512.5 656.5,505.5 669,496 689,486 704,485 719,482 726.5,482 739,486 751.5,489 769,489.5 784,495 796.5,491 811.5,486 824,483 836.5,488 846.5,484 859,479 874,466 886.5,449 899,432.5 909,415 920,397.5 932.5,382.5 945,370 957.5,364 967.5,358 977.5,357 990,356 1002.5,349 1015,340 1025,331 1035,324 1041,321 1050,325 1060,334 1070,345 1082.5,360 1095,376 1107.5,390 1117.5,397.5" stroke="#000080" stroke-width="1.05" fill="none" />
<g stroke="#ff0000" stroke-width="2" stroke-linecap="round"><line x1="991" y1="241" x2="961" y2="294"/><polyline points="957.5,286 961,294 970,292" stroke-width="1.6"/><line x1="1094" y1="230" x2="1044" y2="292.5"/><polyline points="1043,282 1044,292.5 1055,293" stroke-width="1.6"/></g>
<g stroke="#0000ff" stroke-width="1.6"><line x1="997" y1="413" x2="997" y2="477"/><polyline points="990.5,471 997,477.5 1003.5,471"/></g>
<g filter="url(#sh)" opacity=".55"><rect x="1054" y="424" width="4" height="46" fill="#555"/><polygon points="1048,470 1063,470 1055.5,484" fill="#555"/></g>
<rect x="1050" y="421" width="3.4" height="47" fill="#000080"/><polygon points="1044.3,467 1059,467 1051.6,481.5" fill="#000080"/>
</g>
<rect x="746" y="214" width="32" height="16" fill="#fff"/>
<rect x="704" y="291" width="32" height="16" fill="#fff"/>
<text x="747.5" y="226.5" font-size="10.67" fill="#800040" textLength="25.5" lengthAdjust="spacingAndGlyphs" >+21.1</text>
<text x="705.5" y="302.5" font-size="10.67" fill="#800040" textLength="25.5" lengthAdjust="spacingAndGlyphs" >+12.1</text>
<text x="989" y="560.5" font-size="10.67" fill="#800040" textLength="22.5" lengthAdjust="spacingAndGlyphs" >-20.1</text>
<text x="918" y="99.5" font-size="13" fill="#3a3a3a" >2.obchod</text>
<text x="918" y="115.5" font-size="13" fill="#3a3a3a" >po DT kde jsem jeste cekal zda bude trend</text>
<text x="918" y="131.5" font-size="13" fill="#3a3a3a" >potvrzen do UP, ale selhal a cross swing a</text>
<text x="918" y="147.5" font-size="13" fill="#3a3a3a" >2x100 na FinWinu do short a vzapeti extrem</text>
<text x="918" y="163.5" font-size="13" fill="#3a3a3a" >cross a rychly posun na BE+1 neb jsem se</text>
<text x="918" y="179.5" font-size="13" fill="#3a3a3a" >obaval urovne swingu4212 a PT=450 a SL=</text>
<text x="918" y="195.5" font-size="13" fill="#3a3a3a" >80</text>
<rect x="1116.5" y="210" width="43" height="15" fill="#fff"/>
<rect x="1069" y="283" width="34" height="14" fill="#fff"/>
<text x="1117" y="223" font-size="12.5" fill="#ff0000" font-weight="bold" font-style="italic" >2.entry</text>
<text x="1069" y="293" font-size="12.5" fill="#ff0000" font-weight="bold" font-style="italic" >cross</text>
<text x="1069" y="309" font-size="12.5" fill="#ff0000" font-weight="bold" font-style="italic" >swing</text>
<text x="1025.7" y="422.2" font-size="17.3" fill="#c4c4d4" font-weight="bold" textLength="56" lengthAdjust="spacingAndGlyphs" opacity=".7">PT=450</text>
<text x="1024.5" y="421" font-size="17.3" fill="#000080" font-weight="bold" textLength="56" lengthAdjust="spacingAndGlyphs" >PT=450</text>
<text x="49" y="73" font-size="10.67" fill="#000" textLength="103" lengthAdjust="spacingAndGlyphs" xml:space="preserve">FDAXH9  6.0 rng - #1</text>
<text x="158" y="73" font-size="10.67" fill="#000" textLength="43" lengthAdjust="spacingAndGlyphs" xml:space="preserve">C:4202.0</text>
<text x="207" y="73" font-size="10.67" fill="#000" textLength="21" lengthAdjust="spacingAndGlyphs" xml:space="preserve">T:73</text>
<text x="234" y="73" font-size="10.67" fill="#00c000" textLength="37" lengthAdjust="spacingAndGlyphs" xml:space="preserve">Chg:1.0</text>
<text x="277" y="73" font-size="10.67" fill="#ff0000" textLength="54" lengthAdjust="spacingAndGlyphs" xml:space="preserve">DChg:-11.5</text>
<text x="337" y="73" font-size="10.67" fill="#000" textLength="56" lengthAdjust="spacingAndGlyphs" xml:space="preserve">2009-02-19</text>
<text x="399" y="73" font-size="10.67" fill="#000" textLength="36" lengthAdjust="spacingAndGlyphs" xml:space="preserve">9:54:07</text>
<text x="441" y="73" font-size="10.67" fill="#000" textLength="43" lengthAdjust="spacingAndGlyphs" xml:space="preserve">H:4203.5</text>
<text x="490" y="73" font-size="10.67" fill="#000" textLength="42" lengthAdjust="spacingAndGlyphs" xml:space="preserve">L:4198.5</text>
<text x="538" y="73" font-size="10.67" fill="#000" textLength="44" lengthAdjust="spacingAndGlyphs" xml:space="preserve">O:4201.5</text>
<text x="589" y="73" font-size="10.67" fill="#000" textLength="27" lengthAdjust="spacingAndGlyphs" xml:space="preserve">V:190</text>
<text x="622" y="73" font-size="10.67" fill="#000" textLength="43" lengthAdjust="spacingAndGlyphs" xml:space="preserve">B:4201.5</text>
<text x="672" y="73" font-size="10.67" fill="#000" textLength="43" lengthAdjust="spacingAndGlyphs" xml:space="preserve">A:4202.0</text>
<text x="722" y="73" font-size="10.67" fill="#000" textLength="17" lengthAdjust="spacingAndGlyphs" xml:space="preserve">1x2</text>
<text x="746" y="73" font-size="10.67" fill="#000" textLength="32" lengthAdjust="spacingAndGlyphs" xml:space="preserve">RR:1.0</text>
<text x="784" y="73" font-size="10.67" fill="#000" textLength="140" lengthAdjust="spacingAndGlyphs" xml:space="preserve">Moving Average-Exponential:</text>
<text x="932" y="73" font-size="10.67" fill="#000" textLength="69" lengthAdjust="spacingAndGlyphs" xml:space="preserve">Avg: 4203.174</text>
<text x="1011" y="73" font-size="10.67" fill="#000" textLength="53" lengthAdjust="spacingAndGlyphs" xml:space="preserve">(Last, 204)</text>
<text x="1073" y="73" font-size="10.67" fill="#000" textLength="99" lengthAdjust="spacingAndGlyphs" xml:space="preserve">Range Bar Predictor:</text>
<text x="1179" y="73" font-size="10.67" fill="#00ff00" textLength="45" lengthAdjust="spacingAndGlyphs" xml:space="preserve">Predicted</text>
<g shape-rendering="crispEdges">
<rect x="1228" y="62" width="1" height="895" fill="#000"/>
<rect x="1229" y="623" width="3" height="1" fill="#000"/>
<rect x="1229" y="606" width="3" height="1" fill="#000"/>
<rect x="1229" y="588" width="3" height="1" fill="#000"/>
<rect x="1229" y="571" width="3" height="1" fill="#000"/>
<rect x="1229" y="554" width="3" height="1" fill="#000"/>
<rect x="1229" y="536" width="3" height="1" fill="#000"/>
<rect x="1229" y="519" width="3" height="1" fill="#000"/>
<rect x="1229" y="501" width="3" height="1" fill="#000"/>
<rect x="1229" y="484" width="3" height="1" fill="#000"/>
<rect x="1229" y="467" width="3" height="1" fill="#000"/>
<rect x="1229" y="449" width="3" height="1" fill="#000"/>
<rect x="1229" y="432" width="3" height="1" fill="#000"/>
<rect x="1229" y="414" width="3" height="1" fill="#000"/>
<rect x="1229" y="397" width="3" height="1" fill="#000"/>
<rect x="1229" y="380" width="3" height="1" fill="#000"/>
<rect x="1229" y="362" width="3" height="1" fill="#000"/>
<rect x="1229" y="345" width="3" height="1" fill="#000"/>
<rect x="1229" y="328" width="3" height="1" fill="#000"/>
<rect x="1229" y="310" width="3" height="1" fill="#000"/>
<rect x="1229" y="293" width="3" height="1" fill="#000"/>
<rect x="1229" y="276" width="3" height="1" fill="#000"/>
<rect x="1229" y="258" width="3" height="1" fill="#000"/>
<rect x="1229" y="241" width="3" height="1" fill="#000"/>
<rect x="1229" y="223" width="3" height="1" fill="#000"/>
<rect x="1229" y="206" width="3" height="1" fill="#000"/>
<rect x="1229" y="189" width="3" height="1" fill="#000"/>
<rect x="1229" y="171" width="3" height="1" fill="#000"/>
<rect x="1229" y="154" width="3" height="1" fill="#000"/>
<rect x="1229" y="136" width="3" height="1" fill="#000"/>
<rect x="1229" y="119" width="3" height="1" fill="#000"/>
<rect x="1229" y="102" width="3" height="1" fill="#000"/>
<rect x="1229" y="84" width="3" height="1" fill="#000"/>
<rect x="1229" y="67" width="3" height="1" fill="#000"/>
</g>
<text x="1233" y="627" font-size="10.67" fill="#000" textLength="32.5" lengthAdjust="spacingAndGlyphs" >4184.0</text>
<text x="1233" y="610" font-size="10.67" fill="#000" textLength="32.5" lengthAdjust="spacingAndGlyphs" >4186.0</text>
<text x="1233" y="592" font-size="10.67" fill="#000" textLength="32.5" lengthAdjust="spacingAndGlyphs" >4188.0</text>
<text x="1233" y="575" font-size="10.67" fill="#000" textLength="32.5" lengthAdjust="spacingAndGlyphs" >4190.0</text>
<text x="1233" y="558" font-size="10.67" fill="#000" textLength="32.5" lengthAdjust="spacingAndGlyphs" >4192.0</text>
<text x="1233" y="540" font-size="10.67" fill="#000" textLength="32.5" lengthAdjust="spacingAndGlyphs" >4194.0</text>
<text x="1233" y="523" font-size="10.67" fill="#000" textLength="32.5" lengthAdjust="spacingAndGlyphs" >4196.0</text>
<text x="1233" y="505" font-size="10.67" fill="#000" textLength="32.5" lengthAdjust="spacingAndGlyphs" >4198.0</text>
<text x="1233" y="488" font-size="10.67" fill="#000" textLength="32.5" lengthAdjust="spacingAndGlyphs" >4200.0</text>
<text x="1233" y="453" font-size="10.67" fill="#000" textLength="32.5" lengthAdjust="spacingAndGlyphs" >4204.0</text>
<text x="1233" y="436" font-size="10.67" fill="#000" textLength="32.5" lengthAdjust="spacingAndGlyphs" >4206.0</text>
<text x="1233" y="418" font-size="10.67" fill="#000" textLength="32.5" lengthAdjust="spacingAndGlyphs" >4208.0</text>
<text x="1233" y="401" font-size="10.67" fill="#000" textLength="32.5" lengthAdjust="spacingAndGlyphs" >4210.0</text>
<text x="1233" y="384" font-size="10.67" fill="#000" textLength="32.5" lengthAdjust="spacingAndGlyphs" >4212.0</text>
<text x="1233" y="366" font-size="10.67" fill="#000" textLength="32.5" lengthAdjust="spacingAndGlyphs" >4214.0</text>
<text x="1233" y="349" font-size="10.67" fill="#000" textLength="32.5" lengthAdjust="spacingAndGlyphs" >4216.0</text>
<text x="1233" y="332" font-size="10.67" fill="#000" textLength="32.5" lengthAdjust="spacingAndGlyphs" >4218.0</text>
<text x="1233" y="314" font-size="10.67" fill="#000" textLength="32.5" lengthAdjust="spacingAndGlyphs" >4220.0</text>
<text x="1233" y="297" font-size="10.67" fill="#000" textLength="32.5" lengthAdjust="spacingAndGlyphs" >4222.0</text>
<text x="1233" y="280" font-size="10.67" fill="#000" textLength="32.5" lengthAdjust="spacingAndGlyphs" >4224.0</text>
<text x="1233" y="262" font-size="10.67" fill="#000" textLength="32.5" lengthAdjust="spacingAndGlyphs" >4226.0</text>
<text x="1233" y="245" font-size="10.67" fill="#000" textLength="32.5" lengthAdjust="spacingAndGlyphs" >4228.0</text>
<text x="1233" y="227" font-size="10.67" fill="#000" textLength="32.5" lengthAdjust="spacingAndGlyphs" >4230.0</text>
<text x="1233" y="210" font-size="10.67" fill="#000" textLength="32.5" lengthAdjust="spacingAndGlyphs" >4232.0</text>
<text x="1233" y="193" font-size="10.67" fill="#000" textLength="32.5" lengthAdjust="spacingAndGlyphs" >4234.0</text>
<text x="1233" y="175" font-size="10.67" fill="#000" textLength="32.5" lengthAdjust="spacingAndGlyphs" >4236.0</text>
<text x="1233" y="158" font-size="10.67" fill="#000" textLength="32.5" lengthAdjust="spacingAndGlyphs" >4238.0</text>
<text x="1233" y="140" font-size="10.67" fill="#000" textLength="32.5" lengthAdjust="spacingAndGlyphs" >4240.0</text>
<text x="1233" y="123" font-size="10.67" fill="#000" textLength="32.5" lengthAdjust="spacingAndGlyphs" >4242.0</text>
<text x="1233" y="106" font-size="10.67" fill="#000" textLength="32.5" lengthAdjust="spacingAndGlyphs" >4244.0</text>
<text x="1233" y="88" font-size="10.67" fill="#000" textLength="32.5" lengthAdjust="spacingAndGlyphs" >4246.0</text>
<text x="1233" y="71" font-size="10.67" fill="#000" textLength="32.5" lengthAdjust="spacingAndGlyphs" >4248.0</text>
<rect x="1231" y="459" width="37" height="13" fill="#000"/>
<text x="1233" y="470" font-size="10.67" fill="#fff" textLength="32.5" lengthAdjust="spacingAndGlyphs" >4202.0</text>
<g shape-rendering="crispEdges">
<rect x="49" y="770.5" width="1" height="4.5" fill="#e0a0b0"/>
<rect x="49" y="770.5" width="1" height="52" fill="#ff0000"/>
<rect x="55" y="770.5" width="1" height="6.5" fill="#e0a0b0"/>
<rect x="55" y="770.5" width="1" height="47.75" fill="#ff0000"/>
<rect x="61" y="770.5" width="1" height="27.75" fill="#e0a0b0"/>
<rect x="61" y="770.5" width="1" height="62.25" fill="#ff0000"/>
<rect x="67" y="770.5" width="1" height="24" fill="#e0a0b0"/>
<rect x="67" y="770.5" width="1" height="47.75" fill="#ff0000"/>
<rect x="73" y="770.5" width="1" height="6.5" fill="#e0a0b0"/>
<rect x="73" y="770.5" width="1" height="23.5" fill="#ff0000"/>
<rect x="79" y="770.5" width="1" height="9" fill="#e0a0b0"/>
<rect x="79" y="770.5" width="1" height="25.25" fill="#ff0000"/>
<rect x="85" y="770.5" width="1" height="31.5" fill="#e0a0b0"/>
<rect x="85" y="770.5" width="1" height="47.75" fill="#ff0000"/>
<rect x="91" y="770.5" width="1" height="32.75" fill="#e0a0b0"/>
<rect x="91" y="770.5" width="1" height="47.75" fill="#ff0000"/>
<rect x="97" y="770.5" width="1" height="19" fill="#e0a0b0"/>
<rect x="97" y="770.5" width="1" height="21.5" fill="#ff0000"/>
<rect x="103" y="770.5" width="1" height="1.5" fill="#e0a0b0"/>
<rect x="103" y="768.25" width="1" height="2.25" fill="#006000"/>
<rect x="109" y="759" width="1" height="11.5" fill="#cccc33"/>
<rect x="109" y="742" width="1" height="28.5" fill="#006000"/>
<rect x="115" y="759" width="1" height="11.5" fill="#cccc33"/>
<rect x="115" y="733.25" width="1" height="37.25" fill="#006000"/>
<rect x="121" y="750.75" width="1" height="19.75" fill="#cccc33"/>
<rect x="121" y="718.25" width="1" height="52.25" fill="#006000"/>
<rect x="127" y="738.25" width="1" height="32.25" fill="#cccc33"/>
<rect x="127" y="701.5" width="1" height="69" fill="#006000"/>
<rect x="133" y="737" width="1" height="33.5" fill="#cccc33"/>
<rect x="133" y="712.5" width="1" height="58" fill="#006000"/>
<rect x="139" y="754.5" width="1" height="16" fill="#cccc33"/>
<rect x="139" y="747" width="1" height="23.5" fill="#006000"/>
<rect x="145" y="770.5" width="1" height="0.25" fill="#e0a0b0"/>
<rect x="145" y="768.25" width="1" height="2.25" fill="#006000"/>
<rect x="151" y="770.5" width="1" height="6" fill="#e0a0b0"/>
<rect x="151" y="770.5" width="1" height="6.5" fill="#ff0000"/>
<rect x="157" y="770.5" width="1" height="1.5" fill="#e0a0b0"/>
<rect x="157" y="770.5" width="1" height="1.5" fill="#ff0000"/>
<rect x="163" y="770.5" width="1" height="14" fill="#e0a0b0"/>
<rect x="163" y="770.5" width="1" height="21.5" fill="#ff0000"/>
<rect x="169" y="770.5" width="1" height="22.75" fill="#e0a0b0"/>
<rect x="169" y="770.5" width="1" height="37.75" fill="#ff0000"/>
<rect x="175" y="770.5" width="1" height="17.75" fill="#e0a0b0"/>
<rect x="175" y="770.5" width="1" height="34" fill="#ff0000"/>
<rect x="181" y="770.5" width="1" height="27.75" fill="#e0a0b0"/>
<rect x="181" y="770.5" width="1" height="51.5" fill="#ff0000"/>
<rect x="187" y="770.5" width="1" height="27.75" fill="#e0a0b0"/>
<rect x="187" y="770.5" width="1" height="44" fill="#ff0000"/>
<rect x="193" y="770.5" width="1" height="47.75" fill="#e0a0b0"/>
<rect x="193" y="770.5" width="1" height="67" fill="#ff0000"/>
<rect x="199" y="770.5" width="1" height="72.25" fill="#e0a0b0"/>
<rect x="199" y="770.5" width="1" height="72.25" fill="#ff0000"/>
<rect x="205" y="770.5" width="1" height="64" fill="#e0a0b0"/>
<rect x="205" y="770.5" width="1" height="52.75" fill="#ff0000"/>
<rect x="211" y="770.5" width="1" height="59" fill="#e0a0b0"/>
<rect x="211" y="770.5" width="1" height="40.25" fill="#ff0000"/>
<rect x="217" y="770.5" width="1" height="48.5" fill="#e0a0b0"/>
<rect x="217" y="770.5" width="1" height="27.75" fill="#ff0000"/>
<rect x="223" y="770.5" width="1" height="47.75" fill="#e0a0b0"/>
<rect x="223" y="770.5" width="1" height="20.75" fill="#ff0000"/>
<rect x="229" y="770.5" width="1" height="52.75" fill="#e0a0b0"/>
<rect x="229" y="770.5" width="1" height="25.25" fill="#ff0000"/>
<rect x="235" y="770.5" width="1" height="59" fill="#e0a0b0"/>
<rect x="235" y="770.5" width="1" height="32.75" fill="#ff0000"/>
<rect x="241" y="770.5" width="1" height="72.25" fill="#e0a0b0"/>
<rect x="241" y="770.5" width="1" height="53.5" fill="#ff0000"/>
<rect x="247" y="770.5" width="1" height="65.25" fill="#e0a0b0"/>
<rect x="247" y="770.5" width="1" height="47.75" fill="#ff0000"/>
<rect x="253" y="770.5" width="1" height="57.25" fill="#e0a0b0"/>
<rect x="253" y="770.5" width="1" height="31.5" fill="#ff0000"/>
<rect x="259" y="770.5" width="1" height="50.25" fill="#e0a0b0"/>
<rect x="259" y="770.5" width="1" height="23.5" fill="#ff0000"/>
<rect x="265" y="770.5" width="1" height="57.25" fill="#e0a0b0"/>
<rect x="265" y="770.5" width="1" height="42.75" fill="#ff0000"/>
<rect x="271" y="770.5" width="1" height="57.75" fill="#e0a0b0"/>
<rect x="271" y="770.5" width="1" height="46.5" fill="#ff0000"/>
<rect x="277" y="770.5" width="1" height="59.5" fill="#e0a0b0"/>
<rect x="277" y="770.5" width="1" height="52.75" fill="#ff0000"/>
<rect x="283" y="770.5" width="1" height="58.5" fill="#e0a0b0"/>
<rect x="283" y="770.5" width="1" height="44" fill="#ff0000"/>
<rect x="289" y="770.5" width="1" height="44" fill="#e0a0b0"/>
<rect x="289" y="770.5" width="1" height="11.5" fill="#ff0000"/>
<rect x="295" y="770.5" width="1" height="37.75" fill="#e0a0b0"/>
<rect x="295" y="767" width="1" height="3.5" fill="#006000"/>
<rect x="301" y="770.5" width="1" height="52.75" fill="#e0a0b0"/>
<rect x="301" y="770.5" width="1" height="42" fill="#ff0000"/>
<rect x="307" y="770.5" width="1" height="49" fill="#e0a0b0"/>
<rect x="307" y="770.5" width="1" height="36.5" fill="#ff0000"/>
<rect x="313" y="770.5" width="1" height="29.5" fill="#e0a0b0"/>
<rect x="313" y="740" width="1" height="30.5" fill="#006000"/>
<rect x="319" y="770.5" width="1" height="26" fill="#e0a0b0"/>
<rect x="319" y="726.5" width="1" height="44" fill="#006000"/>
<rect x="325" y="770.5" width="1" height="26" fill="#e0a0b0"/>
<rect x="325" y="738.25" width="1" height="32.25" fill="#006000"/>
<rect x="331" y="770.5" width="1" height="26" fill="#e0a0b0"/>
<rect x="331" y="742" width="1" height="28.5" fill="#006000"/>
<rect x="337" y="770.5" width="1" height="18.5" fill="#e0a0b0"/>
<rect x="337" y="728.25" width="1" height="42.25" fill="#006000"/>
<rect x="343" y="770.5" width="1" height="11.5" fill="#e0a0b0"/>
<rect x="343" y="714" width="1" height="56.5" fill="#006000"/>
<rect x="349" y="770.5" width="1" height="28.5" fill="#e0a0b0"/>
<rect x="349" y="762" width="1" height="8.5" fill="#006000"/>
<rect x="355" y="770.5" width="1" height="39" fill="#e0a0b0"/>
<rect x="355" y="770.5" width="1" height="26.5" fill="#ff0000"/>
<rect x="361" y="770.5" width="1" height="45.25" fill="#e0a0b0"/>
<rect x="361" y="770.5" width="1" height="47.75" fill="#ff0000"/>
<rect x="367" y="770.5" width="1" height="62" fill="#e0a0b0"/>
<rect x="367" y="770.5" width="1" height="78.5" fill="#ff0000"/>
<rect x="373" y="770.5" width="1" height="62.75" fill="#e0a0b0"/>
<rect x="373" y="770.5" width="1" height="64" fill="#ff0000"/>
<rect x="379" y="770.5" width="1" height="42" fill="#e0a0b0"/>
<rect x="379" y="770.5" width="1" height="26" fill="#ff0000"/>
<rect x="385" y="770.5" width="1" height="41.5" fill="#e0a0b0"/>
<rect x="385" y="770.5" width="1" height="25.25" fill="#ff0000"/>
<rect x="391" y="770.5" width="1" height="36.5" fill="#e0a0b0"/>
<rect x="391" y="770.5" width="1" height="14.5" fill="#ff0000"/>
<rect x="397" y="770.5" width="1" height="25.25" fill="#e0a0b0"/>
<rect x="397" y="768.25" width="1" height="2.25" fill="#006000"/>
<rect x="403" y="770.5" width="1" height="22.75" fill="#e0a0b0"/>
<rect x="403" y="764" width="1" height="6.5" fill="#006000"/>
<rect x="409" y="770.5" width="1" height="19" fill="#e0a0b0"/>
<rect x="409" y="757.75" width="1" height="12.75" fill="#006000"/>
<rect x="415" y="770.5" width="1" height="24.75" fill="#e0a0b0"/>
<rect x="415" y="764.5" width="1" height="6" fill="#006000"/>
<rect x="421" y="770.5" width="1" height="21" fill="#e0a0b0"/>
<rect x="421" y="755" width="1" height="15.5" fill="#006000"/>
<rect x="427" y="770.5" width="1" height="1.5" fill="#e0a0b0"/>
<rect x="427" y="717" width="1" height="53.5" fill="#006000"/>
<rect x="433" y="770.5" width="1" height="6" fill="#e0a0b0"/>
<rect x="433" y="729.5" width="1" height="41" fill="#006000"/>
<rect x="439" y="770.5" width="1" height="6" fill="#e0a0b0"/>
<rect x="439" y="734.5" width="1" height="36" fill="#006000"/>
<rect x="445" y="768.25" width="1" height="2.25" fill="#cccc33"/>
<rect x="445" y="731.5" width="1" height="39" fill="#006000"/>
<rect x="451" y="767" width="1" height="3.5" fill="#cccc33"/>
<rect x="451" y="732.75" width="1" height="37.75" fill="#006000"/>
<rect x="457" y="747" width="1" height="23.5" fill="#cccc33"/>
<rect x="457" y="715" width="1" height="55.5" fill="#006000"/>
<rect x="463" y="737" width="1" height="33.5" fill="#cccc33"/>
<rect x="463" y="714.5" width="1" height="56" fill="#006000"/>
<rect x="469" y="757" width="1" height="13.5" fill="#cccc33"/>
<rect x="469" y="749.5" width="1" height="21" fill="#006000"/>
<rect x="475" y="770.5" width="1" height="17.75" fill="#e0a0b0"/>
<rect x="475" y="770.5" width="1" height="31.5" fill="#ff0000"/>
<rect x="481" y="770.5" width="1" height="35.25" fill="#e0a0b0"/>
<rect x="481" y="770.5" width="1" height="53.5" fill="#ff0000"/>
<rect x="487" y="770.5" width="1" height="31.5" fill="#e0a0b0"/>
<rect x="487" y="770.5" width="1" height="46.5" fill="#ff0000"/>
<rect x="493" y="770.5" width="1" height="12.75" fill="#e0a0b0"/>
<rect x="493" y="770.5" width="1" height="21.5" fill="#ff0000"/>
<rect x="499" y="770.5" width="1" height="9.5" fill="#e0a0b0"/>
<rect x="499" y="770.5" width="1" height="17.75" fill="#ff0000"/>
<rect x="505" y="770.5" width="1" height="26.5" fill="#e0a0b0"/>
<rect x="505" y="770.5" width="1" height="37.75" fill="#ff0000"/>
<rect x="511" y="770.5" width="1" height="27.75" fill="#e0a0b0"/>
<rect x="511" y="770.5" width="1" height="35.25" fill="#ff0000"/>
<rect x="517" y="770.5" width="1" height="34" fill="#e0a0b0"/>
<rect x="517" y="770.5" width="1" height="39" fill="#ff0000"/>
<rect x="523" y="770.5" width="1" height="58.5" fill="#e0a0b0"/>
<rect x="523" y="770.5" width="1" height="52" fill="#ff0000"/>
<rect x="529" y="770.5" width="1" height="45.25" fill="#e0a0b0"/>
<rect x="529" y="770.5" width="1" height="41.5" fill="#ff0000"/>
<rect x="535" y="770.5" width="1" height="9" fill="#e0a0b0"/>
<rect x="535" y="770.5" width="1" height="6" fill="#ff0000"/>
<rect x="541" y="742" width="1" height="28.5" fill="#cccc33"/>
<rect x="541" y="737" width="1" height="33.5" fill="#006000"/>
<rect x="547" y="709.5" width="1" height="61" fill="#cccc33"/>
<rect x="547" y="690" width="1" height="80.5" fill="#006000"/>
<rect x="553" y="695.75" width="1" height="74.75" fill="#cccc33"/>
<rect x="553" y="688.25" width="1" height="82.25" fill="#006000"/>
<rect x="559" y="712" width="1" height="58.5" fill="#cccc33"/>
<rect x="559" y="715.75" width="1" height="54.75" fill="#006000"/>
<rect x="565" y="712.5" width="1" height="58" fill="#cccc33"/>
<rect x="565" y="725.75" width="1" height="44.75" fill="#006000"/>
<rect x="571" y="709" width="1" height="61.5" fill="#cccc33"/>
<rect x="571" y="729.5" width="1" height="41" fill="#006000"/>
<rect x="577" y="707" width="1" height="63.5" fill="#cccc33"/>
<rect x="577" y="733.25" width="1" height="37.25" fill="#006000"/>
<rect x="583" y="704.5" width="1" height="66" fill="#cccc33"/>
<rect x="583" y="734" width="1" height="36.5" fill="#006000"/>
<rect x="589" y="715" width="1" height="55.5" fill="#cccc33"/>
<rect x="589" y="742.5" width="1" height="28" fill="#006000"/>
<rect x="595" y="709.5" width="1" height="61" fill="#cccc33"/>
<rect x="595" y="740.75" width="1" height="29.75" fill="#006000"/>
<rect x="601" y="719.5" width="1" height="51" fill="#cccc33"/>
<rect x="601" y="748.25" width="1" height="22.25" fill="#006000"/>
<rect x="607" y="735.75" width="1" height="34.75" fill="#cccc33"/>
<rect x="607" y="764.5" width="1" height="6" fill="#006000"/>
<rect x="613" y="727.5" width="1" height="43" fill="#cccc33"/>
<rect x="613" y="754" width="1" height="16.5" fill="#006000"/>
<rect x="619" y="734.5" width="1" height="36" fill="#cccc33"/>
<rect x="619" y="770.5" width="1" height="4" fill="#ff0000"/>
<rect x="625" y="751.5" width="1" height="19" fill="#cccc33"/>
<rect x="625" y="770.5" width="1" height="68.5" fill="#ff0000"/>
<rect x="631" y="752" width="1" height="18.5" fill="#cccc33"/>
<rect x="631" y="770.5" width="1" height="55.25" fill="#ff0000"/>
<rect x="637" y="732" width="1" height="38.5" fill="#cccc33"/>
<rect x="637" y="768.25" width="1" height="2.25" fill="#006000"/>
<rect x="643" y="717" width="1" height="53.5" fill="#cccc33"/>
<rect x="643" y="707.75" width="1" height="62.75" fill="#006000"/>
<rect x="649" y="719.5" width="1" height="51" fill="#cccc33"/>
<rect x="649" y="720.75" width="1" height="49.75" fill="#006000"/>
<rect x="655" y="725.75" width="1" height="44.75" fill="#cccc33"/>
<rect x="655" y="738.25" width="1" height="32.25" fill="#006000"/>
<rect x="661" y="722.5" width="1" height="48" fill="#cccc33"/>
<rect x="661" y="730.75" width="1" height="39.75" fill="#006000"/>
<rect x="667" y="725.75" width="1" height="44.75" fill="#cccc33"/>
<rect x="667" y="738.25" width="1" height="32.25" fill="#006000"/>
<rect x="673" y="737" width="1" height="33.5" fill="#cccc33"/>
<rect x="673" y="762" width="1" height="8.5" fill="#006000"/>
<rect x="679" y="734.5" width="1" height="36" fill="#cccc33"/>
<rect x="679" y="754.5" width="1" height="16" fill="#006000"/>
<rect x="685" y="728.25" width="1" height="42.25" fill="#cccc33"/>
<rect x="685" y="739.5" width="1" height="31" fill="#006000"/>
<rect x="691" y="734.5" width="1" height="36" fill="#cccc33"/>
<rect x="691" y="754" width="1" height="16.5" fill="#006000"/>
<rect x="697" y="752" width="1" height="18.5" fill="#cccc33"/>
<rect x="697" y="770.5" width="1" height="9" fill="#ff0000"/>
<rect x="703" y="762" width="1" height="8.5" fill="#cccc33"/>
<rect x="703" y="770.5" width="1" height="40.25" fill="#ff0000"/>
<rect x="709" y="759.5" width="1" height="11" fill="#cccc33"/>
<rect x="709" y="770.5" width="1" height="37.75" fill="#ff0000"/>
<rect x="715" y="742" width="1" height="28.5" fill="#cccc33"/>
<rect x="715" y="769.5" width="1" height="1" fill="#006000"/>
<rect x="721" y="742" width="1" height="28.5" fill="#cccc33"/>
<rect x="721" y="770.25" width="1" height="0.25" fill="#006000"/>
<rect x="727" y="755.75" width="1" height="14.75" fill="#cccc33"/>
<rect x="727" y="770.5" width="1" height="26.5" fill="#ff0000"/>
<rect x="733" y="770.25" width="1" height="0.25" fill="#cccc33"/>
<rect x="733" y="770.5" width="1" height="58.5" fill="#ff0000"/>
<rect x="739" y="770.5" width="1" height="2.75" fill="#e0a0b0"/>
<rect x="739" y="770.5" width="1" height="50.25" fill="#ff0000"/>
<rect x="745" y="770.5" width="1" height="7.75" fill="#e0a0b0"/>
<rect x="745" y="770.5" width="1" height="48.5" fill="#ff0000"/>
<rect x="751" y="768.25" width="1" height="2.25" fill="#cccc33"/>
<rect x="751" y="770.5" width="1" height="24" fill="#ff0000"/>
<rect x="757" y="757" width="1" height="13.5" fill="#cccc33"/>
<rect x="757" y="770.25" width="1" height="0.25" fill="#006000"/>
<rect x="763" y="769.5" width="1" height="1" fill="#cccc33"/>
<rect x="763" y="770.5" width="1" height="24" fill="#ff0000"/>
<rect x="769" y="770.5" width="1" height="4.5" fill="#e0a0b0"/>
<rect x="769" y="770.5" width="1" height="30.25" fill="#ff0000"/>
<rect x="775" y="770.5" width="1" height="5.25" fill="#e0a0b0"/>
<rect x="775" y="770.5" width="1" height="27.75" fill="#ff0000"/>
<rect x="781" y="770.5" width="1" height="13.25" fill="#e0a0b0"/>
<rect x="781" y="770.5" width="1" height="40.25" fill="#ff0000"/>
<rect x="787" y="770.5" width="1" height="9" fill="#e0a0b0"/>
<rect x="787" y="770.5" width="1" height="17.75" fill="#ff0000"/>
<rect x="793" y="746.5" width="1" height="24" fill="#cccc33"/>
<rect x="793" y="727" width="1" height="43.5" fill="#006000"/>
<rect x="799" y="746.5" width="1" height="24" fill="#cccc33"/>
<rect x="799" y="725" width="1" height="45.5" fill="#006000"/>
<rect x="805" y="752.5" width="1" height="18" fill="#cccc33"/>
<rect x="805" y="729.5" width="1" height="41" fill="#006000"/>
<rect x="811" y="752.5" width="1" height="18" fill="#cccc33"/>
<rect x="811" y="735" width="1" height="35.5" fill="#006000"/>
<rect x="817" y="734" width="1" height="36.5" fill="#cccc33"/>
<rect x="817" y="718.75" width="1" height="51.75" fill="#006000"/>
<rect x="823" y="749.5" width="1" height="21" fill="#cccc33"/>
<rect x="823" y="734.5" width="1" height="36" fill="#006000"/>
<rect x="829" y="770.5" width="1" height="16.5" fill="#e0a0b0"/>
<rect x="829" y="770.5" width="1" height="6.5" fill="#ff0000"/>
<rect x="835" y="770.5" width="1" height="58.5" fill="#e0a0b0"/>
<rect x="835" y="770.5" width="1" height="46.5" fill="#ff0000"/>
<rect x="841" y="770.5" width="1" height="1.5" fill="#e0a0b0"/>
<rect x="841" y="762" width="1" height="8.5" fill="#006000"/>
<rect x="847" y="732.75" width="1" height="37.75" fill="#cccc33"/>
<rect x="847" y="732.75" width="1" height="37.75" fill="#006000"/>
<rect x="853" y="733.25" width="1" height="37.25" fill="#cccc33"/>
<rect x="853" y="735.75" width="1" height="34.75" fill="#006000"/>
<rect x="859" y="722.5" width="1" height="48" fill="#cccc33"/>
<rect x="859" y="728.25" width="1" height="42.25" fill="#006000"/>
<rect x="865" y="704.5" width="1" height="66" fill="#cccc33"/>
<rect x="865" y="712" width="1" height="58.5" fill="#006000"/>
<rect x="871" y="682" width="1" height="88.5" fill="#cccc33"/>
<rect x="871" y="695.75" width="1" height="74.75" fill="#006000"/>
<rect x="877" y="660.75" width="1" height="109.75" fill="#cccc33"/>
<rect x="877" y="692.75" width="1" height="77.75" fill="#006000"/>
<rect x="883" y="649" width="1" height="121.5" fill="#cccc33"/>
<rect x="883" y="698.25" width="1" height="72.25" fill="#006000"/>
<rect x="889" y="678.25" width="1" height="92.25" fill="#cccc33"/>
<rect x="889" y="725" width="1" height="45.5" fill="#006000"/>
<rect x="895" y="672" width="1" height="98.5" fill="#cccc33"/>
<rect x="895" y="725" width="1" height="45.5" fill="#006000"/>
<rect x="901" y="665.75" width="1" height="104.75" fill="#cccc33"/>
<rect x="901" y="725" width="1" height="45.5" fill="#006000"/>
<rect x="907" y="658.25" width="1" height="112.25" fill="#cccc33"/>
<rect x="907" y="722" width="1" height="48.5" fill="#006000"/>
<rect x="913" y="673.25" width="1" height="97.25" fill="#cccc33"/>
<rect x="913" y="730.25" width="1" height="40.25" fill="#006000"/>
<rect x="919" y="683.25" width="1" height="87.25" fill="#cccc33"/>
<rect x="919" y="734.5" width="1" height="36" fill="#006000"/>
<rect x="925" y="699" width="1" height="71.5" fill="#cccc33"/>
<rect x="925" y="744.5" width="1" height="26" fill="#006000"/>
<rect x="931" y="702" width="1" height="68.5" fill="#cccc33"/>
<rect x="931" y="745" width="1" height="25.5" fill="#006000"/>
<rect x="937" y="699.5" width="1" height="71" fill="#cccc33"/>
<rect x="937" y="737" width="1" height="33.5" fill="#006000"/>
<rect x="943" y="708.25" width="1" height="62.25" fill="#cccc33"/>
<rect x="943" y="742" width="1" height="28.5" fill="#006000"/>
<rect x="949" y="726.5" width="1" height="44" fill="#cccc33"/>
<rect x="949" y="770.5" width="1" height="9" fill="#ff0000"/>
<rect x="955" y="733.25" width="1" height="37.25" fill="#cccc33"/>
<rect x="955" y="770.5" width="1" height="24.5" fill="#ff0000"/>
<rect x="961" y="730.75" width="1" height="39.75" fill="#cccc33"/>
<rect x="961" y="770.5" width="1" height="12.25" fill="#ff0000"/>
<rect x="967" y="735.75" width="1" height="34.75" fill="#cccc33"/>
<rect x="967" y="770.5" width="1" height="26.5" fill="#ff0000"/>
<rect x="973" y="745.75" width="1" height="24.75" fill="#cccc33"/>
<rect x="973" y="770.5" width="1" height="58.5" fill="#ff0000"/>
<rect x="979" y="750.25" width="1" height="20.25" fill="#cccc33"/>
<rect x="979" y="770.5" width="1" height="58.5" fill="#ff0000"/>
<rect x="985" y="753.75" width="1" height="16.75" fill="#cccc33"/>
<rect x="985" y="770.5" width="1" height="54" fill="#ff0000"/>
<rect x="991" y="755.25" width="1" height="15.25" fill="#cccc33"/>
<rect x="991" y="770.5" width="1" height="49" fill="#ff0000"/>
<rect x="997" y="743.25" width="1" height="27.25" fill="#cccc33"/>
<rect x="997" y="770.5" width="1" height="11.5" fill="#ff0000"/>
<rect x="1003" y="730.75" width="1" height="39.75" fill="#cccc33"/>
<rect x="1003" y="734.5" width="1" height="36" fill="#006000"/>
<rect x="1009" y="733.25" width="1" height="37.25" fill="#cccc33"/>
<rect x="1009" y="739.5" width="1" height="31" fill="#006000"/>
<rect x="1015" y="740" width="1" height="30.5" fill="#cccc33"/>
<rect x="1015" y="753.75" width="1" height="16.75" fill="#006000"/>
<rect x="1021" y="737" width="1" height="33.5" fill="#cccc33"/>
<rect x="1021" y="733.25" width="1" height="37.25" fill="#006000"/>
<rect x="1027" y="725" width="1" height="45.5" fill="#cccc33"/>
<rect x="1027" y="699.5" width="1" height="71" fill="#006000"/>
<rect x="1033" y="730.75" width="1" height="39.75" fill="#cccc33"/>
<rect x="1033" y="720.75" width="1" height="49.75" fill="#006000"/>
<rect x="1039" y="743.25" width="1" height="27.25" fill="#cccc33"/>
<rect x="1039" y="757" width="1" height="13.5" fill="#006000"/>
<rect x="1045" y="758.25" width="1" height="12.25" fill="#cccc33"/>
<rect x="1045" y="770.5" width="1" height="21.5" fill="#ff0000"/>
<rect x="1051" y="769.5" width="1" height="1" fill="#cccc33"/>
<rect x="1051" y="770.5" width="1" height="37.75" fill="#ff0000"/>
<rect x="1057" y="770.5" width="1" height="6.5" fill="#e0a0b0"/>
<rect x="1057" y="770.5" width="1" height="45.25" fill="#ff0000"/>
<rect x="1063" y="770.5" width="1" height="20.25" fill="#e0a0b0"/>
<rect x="1063" y="770.5" width="1" height="57.75" fill="#ff0000"/>
<rect x="1069" y="770.5" width="1" height="29.5" fill="#e0a0b0"/>
<rect x="1069" y="770.5" width="1" height="61.5" fill="#ff0000"/>
<rect x="1075" y="770.5" width="1" height="34" fill="#e0a0b0"/>
<rect x="1075" y="770.5" width="1" height="55.25" fill="#ff0000"/>
<rect x="1081" y="770.5" width="1" height="34" fill="#e0a0b0"/>
<rect x="1081" y="770.5" width="1" height="44" fill="#ff0000"/>
<rect x="1087" y="770.5" width="1" height="39" fill="#e0a0b0"/>
<rect x="1087" y="770.5" width="1" height="39.5" fill="#ff0000"/>
<rect x="1093" y="770.5" width="1" height="57.75" fill="#e0a0b0"/>
<rect x="1093" y="770.5" width="1" height="48.5" fill="#ff0000"/>
<rect x="1099" y="770.5" width="1" height="52.75" fill="#e0a0b0"/>
<rect x="1099" y="770.5" width="1" height="37.75" fill="#ff0000"/>
<rect x="1105" y="770.5" width="1" height="47.75" fill="#e0a0b0"/>
<rect x="1105" y="770.5" width="1" height="30.25" fill="#ff0000"/>
<rect x="1111" y="770.5" width="1" height="45.25" fill="#e0a0b0"/>
<rect x="1111" y="770.5" width="1" height="26.5" fill="#ff0000"/>
<rect x="1117" y="770.5" width="1" height="37.75" fill="#e0a0b0"/>
<rect x="1117" y="770.5" width="1" height="15.25" fill="#ff0000"/>
<rect x="49" y="770" width="1070" height="1" fill="#c0c0c0"/>
<rect x="49" y="731" width="1070" height="1" fill="#808020"/>
<rect x="49" y="809" width="1070" height="1" fill="#808020"/>
<rect x="49" y="757" width="1070" height="1" fill="#ff8000"/>
<rect x="49" y="784" width="1070" height="1" fill="#ff8000"/>
</g>
<polyline points="50,775 56,777 62,798.25 68,794.5 74,777 80,779.5 86,802 92,803.25 98,789.5 104,772 110,759 116,759 122,750.75 128,738.25 134,737 140,754.5 146,770.75 152,776.5 158,772 164,784.5 170,793.25 176,788.25 182,798.25 188,798.25 194,818.25 200,842.75 206,834.5 212,829.5 218,819 224,818.25 230,823.25 236,829.5 242,842.75 248,835.75 254,827.75 260,820.75 266,827.75 272,828.25 278,830 284,829 290,814.5 296,808.25 302,823.25 308,819.5 314,800 320,796.5 326,796.5 332,796.5 338,789 344,782 350,799 356,809.5 362,815.75 368,832.5 374,833.25 380,812.5 386,812 392,807 398,795.75 404,793.25 410,789.5 416,795.25 422,791.5 428,772 434,776.5 440,776.5 446,768.25 452,767 458,747 464,737 470,757 476,788.25 482,805.75 488,802 494,783.25 500,780 506,797 512,798.25 518,804.5 524,829 530,815.75 536,779.5 542,742 548,709.5 554,695.75 560,712 566,712.5 572,709 578,707 584,704.5 590,715 596,709.5 602,719.5 608,735.75 614,727.5 620,734.5 626,751.5 632,752 638,732 644,717 650,719.5 656,725.75 662,722.5 668,725.75 674,737 680,734.5 686,728.25 692,734.5 698,752 704,762 710,759.5 716,742 722,742 728,755.75 734,770.25 740,773.25 746,778.25 752,768.25 758,757 764,769.5 770,775 776,775.75 782,783.75 788,779.5 794,746.5 800,746.5 806,752.5 812,752.5 818,734 824,749.5 830,787 836,829 842,772 848,732.75 854,733.25 860,722.5 866,704.5 872,682 878,660.75 884,649 890,678.25 896,672 902,665.75 908,658.25 914,673.25 920,683.25 926,699 932,702 938,699.5 944,708.25 950,726.5 956,733.25 962,730.75 968,735.75 974,745.75 980,750.25 986,753.75 992,755.25 998,743.25 1004,730.75 1010,733.25 1016,740 1022,737 1028,725 1034,730.75 1040,743.25 1046,758.25 1052,769.5 1058,777 1064,790.75 1070,800 1076,804.5 1082,804.5 1088,809.5 1094,828.25 1100,823.25 1106,818.25 1112,815.75 1118,808.25" stroke="#408080" stroke-width="2" fill="none" stroke-linejoin="round"/>
<polyline points="50,822.5 56,818.25 62,832.75 68,818.25 74,794 80,795.75 86,818.25 92,818.25 98,792 104,768.25 110,742 116,733.25 122,718.25 128,701.5 134,712.5 140,747 146,768.25 152,777 158,772 164,792 170,808.25 176,804.5 182,822 188,814.5 194,837.5 200,842.75 206,823.25 212,810.75 218,798.25 224,791.25 230,795.75 236,803.25 242,824 248,818.25 254,802 260,794 266,813.25 272,817 278,823.25 284,814.5 290,782 296,767 302,812.5 308,807 314,740 320,726.5 326,738.25 332,742 338,728.25 344,714 350,762 356,797 362,818.25 368,849 374,834.5 380,796.5 386,795.75 392,785 398,768.25 404,764 410,757.75 416,764.5 422,755 428,717 434,729.5 440,734.5 446,731.5 452,732.75 458,715 464,714.5 470,749.5 476,802 482,824 488,817 494,792 500,788.25 506,808.25 512,805.75 518,809.5 524,822.5 530,812 536,776.5 542,737 548,690 554,688.25 560,715.75 566,725.75 572,729.5 578,733.25 584,734 590,742.5 596,740.75 602,748.25 608,764.5 614,754 620,774.5 626,839 632,825.75 638,768.25 644,707.75 650,720.75 656,738.25 662,730.75 668,738.25 674,762 680,754.5 686,739.5 692,754 698,779.5 704,810.75 710,808.25 716,769.5 722,770.25 728,797 734,829 740,820.75 746,819 752,794.5 758,770.25 764,794.5 770,800.75 776,798.25 782,810.75 788,788.25 794,727 800,725 806,729.5 812,735 818,718.75 824,734.5 830,777 836,817 842,762 848,732.75 854,735.75 860,728.25 866,712 872,695.75 878,692.75 884,698.25 890,725 896,725 902,725 908,722 914,730.25 920,734.5 926,744.5 932,745 938,737 944,742 950,779.5 956,795 962,782.75 968,797 974,829 980,829 986,824.5 992,819.5 998,782 1004,734.5 1010,739.5 1016,753.75 1022,733.25 1028,699.5 1034,720.75 1040,757 1046,792 1052,808.25 1058,815.75 1064,828.25 1070,832 1076,825.75 1082,814.5 1088,810 1094,819 1100,808.25 1106,800.75 1112,797 1118,785.75" stroke="#000000" stroke-width="2" fill="none" stroke-linejoin="round"/>
<rect x="1118" y="780" width="33" height="12" fill="#000"/>
<text x="1119" y="790" font-size="10.67" fill="#fff" textLength="30" lengthAdjust="spacingAndGlyphs" >-41.12</text>
<g shape-rendering="crispEdges">
<rect x="1229" y="653" width="3" height="1" fill="#000"/>
<rect x="1229" y="672" width="3" height="1" fill="#000"/>
<rect x="1229" y="692" width="3" height="1" fill="#000"/>
<rect x="1229" y="712" width="3" height="1" fill="#000"/>
<rect x="1229" y="731" width="3" height="1" fill="#000"/>
<rect x="1229" y="750" width="3" height="1" fill="#000"/>
<rect x="1229" y="770" width="3" height="1" fill="#000"/>
<rect x="1229" y="790" width="3" height="1" fill="#000"/>
<rect x="1229" y="809" width="3" height="1" fill="#000"/>
<rect x="1229" y="828" width="3" height="1" fill="#000"/>
<rect x="1229" y="848" width="3" height="1" fill="#000"/>
</g>
<clipPath id="ca"><rect x="1229" y="640" width="50" height="211"/></clipPath><g clip-path="url(#ca)">
<text x="1233" y="657" font-size="10.67" fill="#000" >300.00</text>
<text x="1233" y="676" font-size="10.67" fill="#000" >250.00</text>
<text x="1233" y="696" font-size="10.67" fill="#000" >200.00</text>
<text x="1233" y="716" font-size="10.67" fill="#000" >150.00</text>
<text x="1233" y="735" font-size="10.67" fill="#000" >100.00</text>
<text x="1233" y="754" font-size="10.67" fill="#000" >50.00</text>
<text x="1233" y="774" font-size="10.67" fill="#000" >0.00</text>
<text x="1233" y="794" font-size="10.67" fill="#000" >-50.00</text>
<text x="1233" y="813" font-size="10.67" fill="#000" >-100.00</text>
<text x="1233" y="832" font-size="10.67" fill="#000" >-150.00</text>
<text x="1233" y="852" font-size="10.67" fill="#000" >-200.00</text>
</g>
<clipPath id="ch"><rect x="46" y="634" width="1182" height="16"/></clipPath><g clip-path="url(#ch)">
<text x="47" y="645" font-size="10.67" fill="#000" textLength="99" lengthAdjust="spacingAndGlyphs" >Commod Chan Index:</text>
<text x="154" y="645" font-size="10.67" fill="#408080" textLength="53" lengthAdjust="spacingAndGlyphs" >CCI: -94.37</text>
<text x="213" y="645" font-size="10.67" fill="#ff00ff" textLength="53" lengthAdjust="spacingAndGlyphs" >Line1: 0.00</text>
<text x="272" y="645" font-size="10.67" fill="#ff8000" textLength="59" lengthAdjust="spacingAndGlyphs" >Line2: 35.00</text>
<text x="336" y="645" font-size="10.67" fill="#ff8000" textLength="63" lengthAdjust="spacingAndGlyphs" >Line3: -35.00</text>
<text x="410" y="645" font-size="10.67" fill="#000" textLength="141" lengthAdjust="spacingAndGlyphs" >(HLC Avg, 50, 0.015, 35, -35)</text>
<text x="560" y="645" font-size="10.67" fill="#000" textLength="99" lengthAdjust="spacingAndGlyphs" >Commod Chan Index:</text>
<text x="667" y="645" font-size="10.67" fill="#e0a0b0" textLength="53" lengthAdjust="spacingAndGlyphs" >CCI: -94.37</text>
<text x="726" y="645" font-size="10.67" fill="#ff00ff" textLength="53" lengthAdjust="spacingAndGlyphs" >Line1: 0.00</text>
<text x="785" y="645" font-size="10.67" fill="#ffff00" textLength="65" lengthAdjust="spacingAndGlyphs" >Line2: 100.00</text>
<text x="856" y="645" font-size="10.67" fill="#ff8000" textLength="69" lengthAdjust="spacingAndGlyphs" >Line3: -100.00</text>
<text x="934" y="645" font-size="10.67" fill="#000" textLength="154" lengthAdjust="spacingAndGlyphs" >(HLC Avg, 50, 0.015, 100, -100)</text>
<text x="1097" y="645" font-size="10.67" fill="#000" textLength="99" lengthAdjust="spacingAndGlyphs" >Commod Chan Index:</text>
<text x="1204" y="645" font-size="10.67" fill="#ff0000" textLength="24" lengthAdjust="spacingAndGlyphs" >CCI: -</text>
</g>
<g shape-rendering="crispEdges">
<rect x="49" y="882" width="1070" height="1" fill="#808080"/>
<rect x="49" y="935" width="1070" height="1" fill="#808080"/>
<rect x="49" y="909" width="18" height="1" fill="#ff0000"/>
<rect x="73" y="909" width="18" height="1" fill="#ff0000"/>
<rect x="97" y="909" width="18" height="1" fill="#ff0000"/>
<rect x="121" y="909" width="18" height="1" fill="#ff0000"/>
<rect x="145" y="909" width="18" height="1" fill="#ff0000"/>
<rect x="169" y="909" width="18" height="1" fill="#ff0000"/>
<rect x="193" y="909" width="18" height="1" fill="#ff0000"/>
<rect x="217" y="909" width="18" height="1" fill="#ff0000"/>
<rect x="241" y="909" width="18" height="1" fill="#ff0000"/>
<rect x="265" y="909" width="18" height="1" fill="#ff0000"/>
<rect x="289" y="909" width="18" height="1" fill="#ff0000"/>
<rect x="313" y="909" width="18" height="1" fill="#ff0000"/>
<rect x="337" y="909" width="18" height="1" fill="#ff0000"/>
<rect x="361" y="909" width="18" height="1" fill="#ff0000"/>
<rect x="385" y="909" width="18" height="1" fill="#ff0000"/>
<rect x="409" y="909" width="18" height="1" fill="#ff0000"/>
<rect x="433" y="909" width="18" height="1" fill="#ff0000"/>
<rect x="457" y="909" width="18" height="1" fill="#ff0000"/>
<rect x="481" y="909" width="18" height="1" fill="#ff0000"/>
<rect x="505" y="909" width="18" height="1" fill="#ff0000"/>
<rect x="529" y="909" width="18" height="1" fill="#ff0000"/>
<rect x="553" y="909" width="18" height="1" fill="#ff0000"/>
<rect x="577" y="909" width="18" height="1" fill="#ff0000"/>
<rect x="601" y="909" width="18" height="1" fill="#ff0000"/>
<rect x="625" y="909" width="18" height="1" fill="#ff0000"/>
<rect x="649" y="909" width="18" height="1" fill="#ff0000"/>
<rect x="673" y="909" width="18" height="1" fill="#ff0000"/>
<rect x="697" y="909" width="18" height="1" fill="#ff0000"/>
<rect x="721" y="909" width="18" height="1" fill="#ff0000"/>
<rect x="745" y="909" width="18" height="1" fill="#ff0000"/>
<rect x="769" y="909" width="18" height="1" fill="#ff0000"/>
<rect x="793" y="909" width="18" height="1" fill="#ff0000"/>
<rect x="817" y="909" width="18" height="1" fill="#ff0000"/>
<rect x="841" y="909" width="18" height="1" fill="#ff0000"/>
<rect x="865" y="909" width="18" height="1" fill="#ff0000"/>
<rect x="889" y="909" width="18" height="1" fill="#ff0000"/>
<rect x="913" y="909" width="18" height="1" fill="#ff0000"/>
<rect x="937" y="909" width="18" height="1" fill="#ff0000"/>
<rect x="961" y="909" width="18" height="1" fill="#ff0000"/>
<rect x="985" y="909" width="18" height="1" fill="#ff0000"/>
<rect x="1009" y="909" width="18" height="1" fill="#ff0000"/>
<rect x="1033" y="909" width="18" height="1" fill="#ff0000"/>
<rect x="1057" y="909" width="18" height="1" fill="#ff0000"/>
<rect x="1081" y="909" width="18" height="1" fill="#ff0000"/>
<rect x="1105" y="909" width="14" height="1" fill="#ff0000"/>
</g>
<polyline points="50,930 56,945 62,953 68,930 74,905.5 80,927.5 86,953 92,930 98,905.5 104,876.25 110,883.75 116,891.25 122,867.5 128,876.25 134,886.25 140,903.75 146,915.5 152,913.75 158,936.25 164,953 170,930 176,938.75 182,931.25 188,943.75 194,953 200,953 206,931.25 212,928 218,915.5 224,928.75 230,921.25 236,948.75 242,953 248,923.75 254,911.25 260,927.5 266,945 272,924.25 278,953 284,922.5 290,898.75 296,903.75 302,943.75 308,912.5 314,881.25 320,872 326,901.25 332,876.25 338,884.25 344,892.5 350,915 356,941.25 362,953 368,953 374,936.25 380,915.5 386,928.75 392,910.5 398,912.5 404,884.5 410,891.25 416,898 422,877.5 428,887 434,896.25 440,876.25 446,896.25 452,878.75 458,886.25 464,893.75 470,917.5 476,945 482,953 488,928.75 494,932 500,913.75 506,941.25 512,928.75 518,951.25 524,953 530,917.5 536,883 542,883.75 548,885 554,885.5 560,886.25 566,870.5 572,883.75 578,868 584,881.75 590,877 596,871.75 602,910 608,910 614,893.75 620,928.75 626,953 632,918 638,891.25 644,893.75 650,896.75 656,901.25 662,872.5 668,896.25 674,888.75 680,883 686,872.5 692,911.25 698,953 704,920 710,913.75 716,887.5 722,910 728,925 734,947 740,920.5 746,947 752,910 758,917.5 764,912.5 770,941.25 776,918.75 782,949.25 788,905.5 794,903.25 800,901.25 806,907 812,883.25 818,891.25 824,898.75 830,925 836,947 842,895 848,868 854,900 860,867.5 866,871.25 872,875 878,878.75 884,882.5 890,886.25 896,866.25 902,872.5 908,878.75 914,884.25 920,872.5 926,900 932,883.75 938,870.5 944,901.25 950,934.5 956,916.25 962,902.5 968,936.25 974,953 980,923.25 986,948 992,927.5 998,904.5 1004,898.75 1010,894.5 1016,884.5 1022,874.25 1028,881.25 1034,889.25 1040,910 1046,931.25 1052,953 1058,953 1064,953 1070,953 1076,937.5 1082,946.25 1088,950 1094,953 1100,934.5 1106,941.25 1112,922.5 1118,911.25" stroke="#800000" stroke-width="1.2" fill="none" />
<text x="47" y="863" font-size="10.67" fill="#000" textLength="62" lengthAdjust="spacingAndGlyphs" >Williams %R:</text>
<text x="115" y="863" font-size="10.67" fill="#800000" textLength="53" lengthAdjust="spacingAndGlyphs" >%R: -51.35</text>
<text x="178" y="863" font-size="10.67" fill="#000" textLength="127" lengthAdjust="spacingAndGlyphs" >(10, Yes, High, Low, Last)</text>
<text x="314" y="863" font-size="10.67" fill="#000" textLength="23" lengthAdjust="spacingAndGlyphs" >Line:</text>
<text x="343" y="863" font-size="10.67" fill="#ff0000" textLength="57" lengthAdjust="spacingAndGlyphs" >Line: -50.00</text>
<text x="409" y="863" font-size="10.67" fill="#000" textLength="24" lengthAdjust="spacingAndGlyphs" >(-50)</text>
<text x="442" y="863" font-size="10.67" fill="#000" textLength="23" lengthAdjust="spacingAndGlyphs" >Line:</text>
<text x="471" y="863" font-size="10.67" fill="#808080" textLength="57" lengthAdjust="spacingAndGlyphs" >Line: -20.00</text>
<text x="537" y="863" font-size="10.67" fill="#000" textLength="24" lengthAdjust="spacingAndGlyphs" >(-20)</text>
<text x="570" y="863" font-size="10.67" fill="#000" textLength="23" lengthAdjust="spacingAndGlyphs" >Line:</text>
<text x="599" y="863" font-size="10.67" fill="#808080" textLength="57" lengthAdjust="spacingAndGlyphs" >Line: -80.00</text>
<text x="665" y="863" font-size="10.67" fill="#000" textLength="24" lengthAdjust="spacingAndGlyphs" >(-80)</text>
<g shape-rendering="crispEdges">
<rect x="1229" y="864" width="3" height="1" fill="#000"/>
<rect x="1229" y="882" width="3" height="1" fill="#000"/>
<rect x="1229" y="900" width="3" height="1" fill="#000"/>
<rect x="1229" y="917" width="3" height="1" fill="#000"/>
<rect x="1229" y="935" width="3" height="1" fill="#000"/>
<rect x="1229" y="952" width="3" height="1" fill="#000"/>
</g>
<clipPath id="cw"><rect x="1229" y="855" width="50" height="100"/></clipPath><g clip-path="url(#cw)">
<text x="1233" y="868" font-size="10.67" fill="#000" >0.00</text>
<text x="1233" y="886" font-size="10.67" fill="#000" >-20.00</text>
<text x="1233" y="904" font-size="10.67" fill="#000" >-40.00</text>
<text x="1233" y="921" font-size="10.67" fill="#000" >-60.00</text>
<text x="1233" y="939" font-size="10.67" fill="#000" >-80.00</text>
<text x="1233" y="956" font-size="10.67" fill="#000" >-100.00</text>
</g>
<g shape-rendering="crispEdges">
<rect x="46" y="956" width="1183" height="1" fill="#000"/>
<rect x="49" y="957" width="1" height="3" fill="#000"/>
<rect x="97" y="957" width="1" height="3" fill="#000"/>
<rect x="145" y="957" width="1" height="3" fill="#000"/>
<rect x="193" y="957" width="1" height="3" fill="#000"/>
<rect x="241" y="957" width="1" height="3" fill="#000"/>
<rect x="289" y="957" width="1" height="3" fill="#000"/>
<rect x="337" y="957" width="1" height="3" fill="#000"/>
<rect x="385" y="957" width="1" height="3" fill="#000"/>
<rect x="433" y="957" width="1" height="3" fill="#000"/>
<rect x="481" y="957" width="1" height="3" fill="#000"/>
<rect x="529" y="957" width="1" height="3" fill="#000"/>
<rect x="577" y="957" width="1" height="3" fill="#000"/>
<rect x="625" y="957" width="1" height="3" fill="#000"/>
<rect x="673" y="957" width="1" height="3" fill="#000"/>
<rect x="721" y="957" width="1" height="3" fill="#000"/>
<rect x="769" y="957" width="1" height="3" fill="#000"/>
<rect x="877" y="957" width="1" height="3" fill="#000"/>
<rect x="919" y="957" width="1" height="3" fill="#000"/>
<rect x="961" y="957" width="1" height="3" fill="#000"/>
<rect x="1003" y="957" width="1" height="3" fill="#000"/>
<rect x="1045" y="957" width="1" height="3" fill="#000"/>
<rect x="1087" y="957" width="1" height="3" fill="#000"/>
<rect x="1129" y="957" width="1" height="3" fill="#000"/>
<rect x="1177" y="957" width="1" height="3" fill="#000"/>
<rect x="841" y="957" width="1" height="5" fill="#000"/>
<rect x="830" y="962" width="23" height="13" fill="#000"/>
</g>
<g clip-path="url(#cx)">
<text x="49.5" y="972" font-size="10.67" fill="#000" text-anchor="middle" textLength="41" lengthAdjust="spacingAndGlyphs" >18:34:22</text>
<text x="97.5" y="972" font-size="10.67" fill="#000" text-anchor="middle" textLength="41" lengthAdjust="spacingAndGlyphs" >18:52:59</text>
<text x="145.5" y="972" font-size="10.67" fill="#000" text-anchor="middle" textLength="41" lengthAdjust="spacingAndGlyphs" >19:03:57</text>
<text x="193.5" y="972" font-size="10.67" fill="#000" text-anchor="middle" textLength="41" lengthAdjust="spacingAndGlyphs" >19:19:05</text>
<text x="241.5" y="972" font-size="10.67" fill="#000" text-anchor="middle" textLength="41" lengthAdjust="spacingAndGlyphs" >19:39:04</text>
<text x="289.5" y="972" font-size="10.67" fill="#000" text-anchor="middle" textLength="41" lengthAdjust="spacingAndGlyphs" >19:54:57</text>
<text x="337.5" y="972" font-size="10.67" fill="#000" text-anchor="middle" textLength="41" lengthAdjust="spacingAndGlyphs" >20:06:21</text>
<text x="385.5" y="972" font-size="10.67" fill="#000" text-anchor="middle" textLength="41" lengthAdjust="spacingAndGlyphs" >20:18:40</text>
<text x="433.5" y="972" font-size="10.67" fill="#000" text-anchor="middle" textLength="41" lengthAdjust="spacingAndGlyphs" >20:27:47</text>
<text x="481.5" y="972" font-size="10.67" fill="#000" text-anchor="middle" textLength="41" lengthAdjust="spacingAndGlyphs" >20:37:14</text>
<text x="529.5" y="972" font-size="10.67" fill="#000" text-anchor="middle" textLength="41" lengthAdjust="spacingAndGlyphs" >20:55:31</text>
<text x="577.5" y="972" font-size="10.67" fill="#000" text-anchor="middle" textLength="41" lengthAdjust="spacingAndGlyphs" >21:00:28</text>
<text x="625.5" y="972" font-size="10.67" fill="#000" text-anchor="middle" textLength="41" lengthAdjust="spacingAndGlyphs" >21:09:19</text>
<text x="673.5" y="972" font-size="10.67" fill="#000" text-anchor="middle" textLength="41" lengthAdjust="spacingAndGlyphs" >21:15:29</text>
<text x="721.5" y="972" font-size="10.67" fill="#000" text-anchor="middle" textLength="41" lengthAdjust="spacingAndGlyphs" >21:24:33</text>
<text x="769.5" y="972" font-size="10.67" fill="#000" text-anchor="middle" textLength="41" lengthAdjust="spacingAndGlyphs" >21:36:55</text>
<text x="877.5" y="972" font-size="10.67" fill="#000" text-anchor="middle" textLength="36" lengthAdjust="spacingAndGlyphs" >8:27:46</text>
<text x="919.5" y="972" font-size="10.67" fill="#000" text-anchor="middle" textLength="36" lengthAdjust="spacingAndGlyphs" >9:00:07</text>
<text x="961.5" y="972" font-size="10.67" fill="#000" text-anchor="middle" textLength="36" lengthAdjust="spacingAndGlyphs" >9:08:14</text>
<text x="1003.5" y="972" font-size="10.67" fill="#000" text-anchor="middle" textLength="36" lengthAdjust="spacingAndGlyphs" >9:25:46</text>
<text x="1045.5" y="972" font-size="10.67" fill="#000" text-anchor="middle" textLength="36" lengthAdjust="spacingAndGlyphs" >9:35:34</text>
<text x="1087.5" y="972" font-size="10.67" fill="#000" text-anchor="middle" textLength="36" lengthAdjust="spacingAndGlyphs" >9:46:03</text>
<text x="1129.5" y="972" font-size="10.67" fill="#000" text-anchor="middle" textLength="36" lengthAdjust="spacingAndGlyphs" >9:55:02</text>
<text x="1177.5" y="972" font-size="10.67" fill="#000" text-anchor="middle" textLength="41" lengthAdjust="spacingAndGlyphs" >10:05:26</text>
<text x="841.5" y="972.5" font-size="10.67" fill="#fff" text-anchor="middle" textLength="20" lengthAdjust="spacingAndGlyphs" >2/19</text>
<text x="1236" y="972" font-size="10.67" fill="#000" >5</text>
</g>
</svg>
<div id="task">
<div style="left:10px;top:-3px;width:40px;height:40px;border-radius:50%;background:radial-gradient(circle at 50% 30%,#a8cce8 0,#4a86b8 35%,#1a4a80 65%,#0c2a50 85%,#0aa0c8 100%);border:1px solid #10202c;box-shadow:0 0 2px 1px #000"><span style="left:9px;top:7px;width:10px;height:9px;background:linear-gradient(#e84c20,#f09838);border-radius:3px 1px 0 1px;transform:skewY(-10deg)"></span><span style="left:20px;top:6px;width:10px;height:10px;background:linear-gradient(#78b830,#a8d060);border-radius:1px 3px 1px 0;transform:skewY(-10deg)"></span><span style="left:8px;top:18px;width:10px;height:9px;background:linear-gradient(#3890e0,#70b8f0);border-radius:1px 0 1px 3px;transform:skewY(-10deg)"></span><span style="left:19px;top:17px;width:10px;height:10px;background:linear-gradient(#f8b820,#f8d860);border-radius:0 1px 3px 1px;transform:skewY(-10deg)"></span></div>
<span style="left:65px;top:9px;width:16px;height:13px;background:#0a2a8a;border:1px solid #b8c8e0"><span style="left:1px;top:1px;width:8px;height:5px;background:#e8eef8;border-top:2px solid #2a8a8a"></span><span style="left:5px;top:5px;width:8px;height:5px;background:#fff;border-top:2px solid #2a8a8a"></span></span>
<span style="left:88px;top:9px;width:16px;height:13px;background:linear-gradient(135deg,#6aa0f0,#2a60c0);border:1px solid #c0cce0;border-bottom:3px solid #383c44"></span>
<span style="left:113px;top:1px;color:#2a98f0;font-size:21px;font-weight:bold;font-family:'Liberation Sans',sans-serif">e</span><span style="left:110px;top:12px;width:20px;height:8px;border:1.5px solid #e8a818;border-radius:50%;transform:rotate(-32deg);border-bottom-color:transparent"></span>
<span style="left:144px;top:0px;color:#fff;font-size:16px">»</span>
<div class="tb" style="left:163px;width:155px"><span style="left:6px;top:5px;width:15px;height:15px;border-radius:3px;background:conic-gradient(#d02020,#208040,#2040c0,#d02020)"></span>Simulator - InfinityA...</div>
<div class="tb" style="left:323px;width:155px;font-size:11.4px"><span style="left:6px;top:5px;width:15px;height:15px;border-radius:50%;background:#0018e0;border:1px solid #000;overflow:hidden"><span style="left:1px;top:0;width:6px;height:8px;background:#10d010;border-radius:40% 60% 50% 30%"></span><span style="left:7px;top:4px;width:6px;height:9px;background:#10d010;border-radius:50% 30% 60% 40%"></span></span>Sierra Chart TA 381  ...</div>
<span style="left:1145px;top:8px;color:#e8e8e8;font-size:11.5px">CS</span>
<span style="left:1176px;top:11px;width:6px;height:6px;border-left:2.5px solid #fff;border-bottom:2.5px solid #fff;transform:rotate(45deg) skew(12deg,12deg)"></span>
<span style="left:1203px;top:5px;width:11px;height:8px;background:#2a68c8;border:1px solid #e8eef8"></span><span style="left:1200px;top:8px;width:11px;height:9px;background:#2a68c8;border:1px solid #f4f8fc"></span><span style="left:1202px;top:17px;width:7px;height:2px;background:#d8dce4"></span>
<span style="left:1206px;top:12px;width:9px;height:9px;border-radius:50%;background:radial-gradient(circle at 40% 40%,#40d850,#1a68c8 70%);"></span>
<span style="left:1218px;top:10px;width:4px;height:7px;background:#f0f0f0"></span><span style="left:1218px;top:6px;border:7px solid transparent;border-right:7px solid #f0f0f0;border-left:0"></span><span style="left:1227px;top:9px;width:3px;height:8px;border-right:1.5px solid #58c858;border-radius:0 50% 50% 0"></span><span style="left:1229px;top:7px;width:4px;height:12px;border-right:1.5px solid #58c858;border-radius:0 50% 50% 0"></span>
<span style="left:1243px;top:8px;color:#fff;font-size:11.5px">9:54</span>
</div>
</body></html>
